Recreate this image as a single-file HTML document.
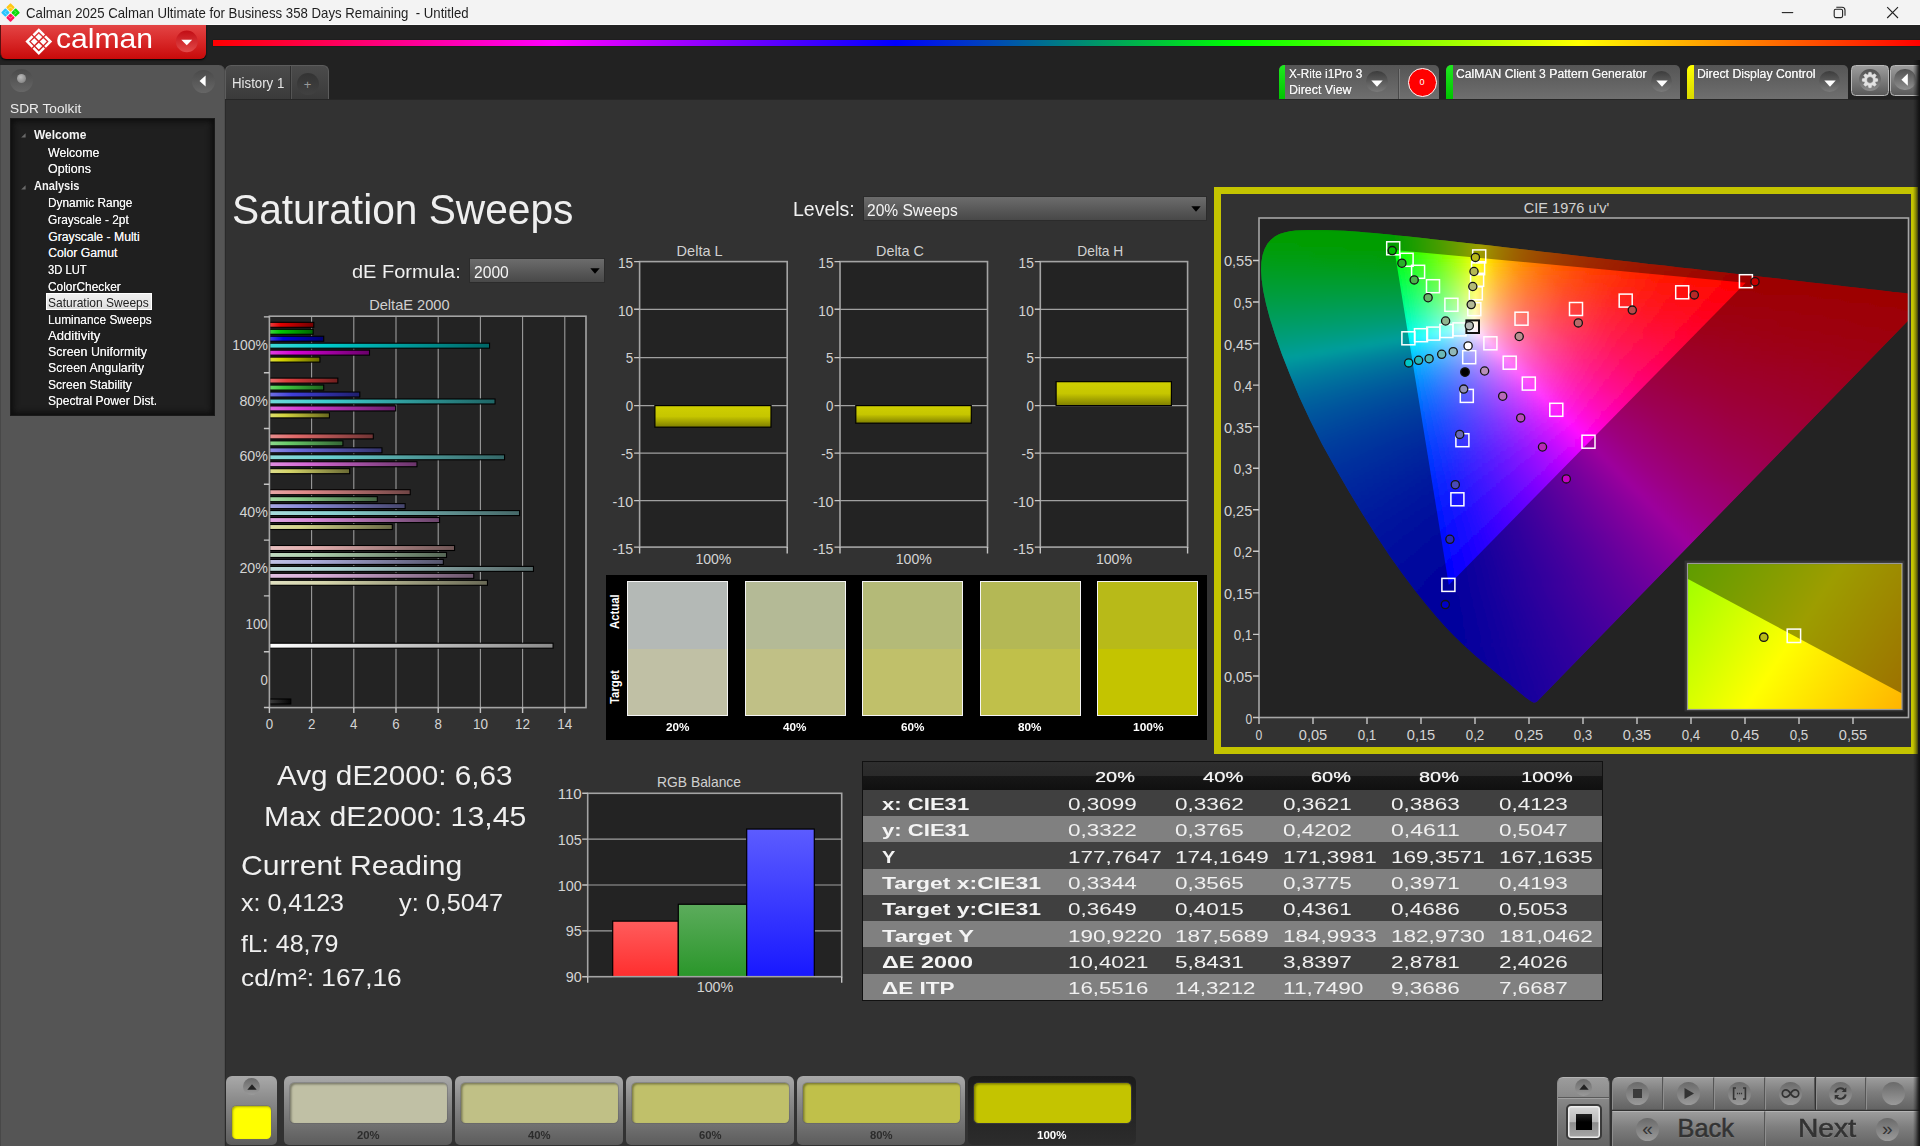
<!DOCTYPE html>
<html lang="en"><head><meta charset="utf-8"><title>Calman 2025 Calman Ultimate for Business - Untitled</title>
<style>

html,body{margin:0;padding:0}
body{width:1920px;height:1146px;overflow:hidden;position:relative;background:#323232;font-family:"Liberation Sans",sans-serif;color:#eee}
div,span,svg{position:absolute;box-sizing:border-box}
.t{white-space:pre;line-height:1;transform-origin:0 0;display:block}
svg{overflow:visible}
svg text{font-family:"Liberation Sans",sans-serif}

#titlebar{left:0;top:0;width:1920px;height:25px;background:#f3f3f3;border-bottom:1px solid #fbfbfb;color:#1e1e1e}
#band{left:0;top:25px;width:1920px;height:74px;background:#222}
#logo{left:0;top:25px;width:206px;height:34px;border-radius:0 0 6px 6px;background:linear-gradient(#e34545,#d92a2a 45%,#c80a0a);border-left:1px solid #5a1010;box-shadow:0 1px 2px #000}
#rainbow{left:213px;top:39.5px;width:1707px;height:6px;background:linear-gradient(90deg,#f00,#f0f 20%,#00f 40%,#0f0 60%,#ff0 80%,#f00);box-shadow:0 0 1px rgba(0,0,0,.6)}
.rb{border-radius:50%;background:linear-gradient(#444,#707070)}
#tabs{left:225px;top:65px;width:104px;height:34px;border-radius:6px 6px 0 0;background:linear-gradient(#4b4b4b,#3a3a3a);border:1px solid #5c5c5c;border-bottom:none}
#content{left:225px;top:99px;width:1695px;height:1047px;background:#323232;border-top:1px solid #262626;border-left:1px solid #2a2a2a}
.dev{top:65px;height:34px;border-radius:5px 5px 0 0;background:linear-gradient(#555,#6f6f6f);overflow:hidden}
.dev i{position:absolute;left:0;top:0;width:6.5px;height:34px;border-radius:5px 0 0 0}
.tbtn{top:64.7px;height:31.8px;border:1.4px solid #b8b8b8;border-radius:4.5px;background:linear-gradient(#9c9c9c,#5a5a5a)}
#rstrip{z-index:50;left:1912.5px;top:60px;width:7.5px;height:1086px;background:linear-gradient(90deg,rgba(17,17,17,0),rgba(17,17,17,.35) 40%,rgba(17,17,17,.8) 75%,#111)}

#side{left:0;top:65px;width:225px;height:1081px;background:#555;border-radius:0 6px 0 0;border-left:1.5px solid #484848;border-right:1px solid #4c4c4c}
#tree{left:9.4px;top:53px;width:205px;height:298.2px;background:#1f1f1f;box-shadow:inset 0 0 6px 2px #0c0c0c;border:1px solid #1a1a1a}
.sb{width:23px;height:23px;border-radius:50%;background:linear-gradient(#4a4a4a,#666)}
#sel{left:35px;top:174.3px;width:105.4px;height:16.3px;background:linear-gradient(#f0f0f0,#dedede);border:1px solid #fff}

.dd{background:linear-gradient(#6c6c6c,#484848);border:1px solid #2b2b2b}
#swp{left:606.2px;top:574.7px;width:600.8px;height:165.3px;background:#000}
.sw{top:6.5px;width:101.3px;height:135px;border:1px solid #f4f4f4}
.sw b{position:absolute;left:0;top:66.8px;width:100%;height:66.2px}

#tbl{left:862.3px;top:760.8px;width:740.3px;height:239.8px;background:#404040;border:1.3px solid #111;overflow:hidden}
#tbl .hd{left:0;top:0;width:100%;height:28.2px;background:linear-gradient(#2e2e2e,#2a2a2a 49%,#171717 51%,#101010)}
#tbl .r{left:0;width:100%;height:26.4px}

.bb{top:1076px;height:69px;border-radius:6px 6px 5px 5px;background:linear-gradient(#a9a9a9,#8b8b8b 35%,#5c5c5c)}
.bb u{position:absolute;left:6px;top:6.6px;width:157.5px;height:40px;border-radius:4.5px;box-shadow:inset 1.5px 1.5px 2px rgba(0,0,0,.35),0 0 0 1px rgba(90,90,90,.35)}
.bsel{background:linear-gradient(#1c1c1c,#2c2c2c)}
.cb{background:linear-gradient(#9c9c9c,#7e7e7e 45%,#646464);border:1px solid #565656;border-top-color:#b4b4b4;border-left-color:#8e8e8e}
.ic{width:23px;height:23px;border-radius:50%;background:linear-gradient(#6a6a6a,#9a9a9a)}

</style></head>
<body>
<!-- chrome -->
<div id="titlebar">
<svg width="22" height="25" viewBox="0 0 22 25" style="left:0;top:0"><g transform="translate(10.5,12.6)"><rect x="-3.1" y="-3.1" width="6.2" height="6.2" rx=".9" transform="translate(0,-5.2) rotate(45)" fill="#ffc814"/><rect x="-3.1" y="-3.1" width="6.2" height="6.2" rx=".9" transform="translate(-5.1,0) rotate(45)" fill="#28c4ff"/><rect x="-3.1" y="-3.1" width="6.2" height="6.2" rx=".9" transform="translate(5.1,0) rotate(45)" fill="#0adc0a"/><rect x="-3.1" y="-3.1" width="6.2" height="6.2" rx=".9" transform="translate(0,5.1) rotate(45)" fill="#ff145a"/><path d="M-2.100-3.600L0-5.700 2.100-3.600M-3.600-2.100L-5.700 0-3.600 2.100M3.600-2.100L5.700 0 3.600 2.100M-2.100 3.600L0 5.700 2.100 3.600" fill="none" stroke="#fff" stroke-opacity=".5" stroke-width=".8"/></g></svg>
<span class="t" style="left:26.4px;top:6.26px;font-size:14.1px;transform:scaleX(0.937);">Calman 2025 Calman Ultimate for Business 358 Days Remaining  - Untitled</span>
<svg width="140" height="25" viewBox="1780 0 140 25" style="left:1780px;top:0" fill="none" stroke="#222" stroke-width="1.1"><path d="M1781.8 12.6h11.4"/><rect x="1834.2" y="9.2" width="8.4" height="8.4" rx="1.6"/><path d="M1836.3 7.2h5.7a3 3 0 0 1 3 3v5.6"/><path d="M1887.2 7.2l10.8 10.8M1898 7.2l-10.8 10.8"/></svg>
</div>
<div id="band"></div>
<div id="logo">
<svg width="206" height="34" viewBox="0 25 206 34" style="left:-1px;top:0"><g transform="translate(38.8,41.6)" fill="#fff">
<path d="M0-13.4L13.4 0 0 13.4-13.4 0ZM0-9.8L-9.8 0 0 9.8 9.8 0Z" fill-rule="evenodd"/>
<g stroke="#d82828" stroke-width="1.3"><path d="M-7.600-7.600l3.400 3.400M7.600-7.600l-3.400 3.400M-7.600 7.600l3.400-3.400M7.600 7.600l-3.400-3.400"/></g>
<rect x="-2.45" y="-2.45" width="4.9" height="4.9" transform="translate(0,-4.5) rotate(45)"/>
<rect x="-2.45" y="-2.45" width="4.9" height="4.9" transform="translate(-4.5,0) rotate(45)"/>
<rect x="-2.45" y="-2.45" width="4.9" height="4.9" transform="translate(4.5,0) rotate(45)"/>
<rect x="-2.45" y="-2.45" width="4.9" height="4.9" transform="translate(0,4.5) rotate(45)"/>
</g>
<circle cx="186.8" cy="41.4" r="10.9" fill="url(#lgd)"/><path d="M181.3 39.7h10.9l-5.450 5.600z" fill="#fff"/>
<defs><linearGradient id="lgd" x1="0" y1="0" x2="0" y2="1"><stop offset="0" stop-color="#c20d14"/><stop offset="1" stop-color="#e24a4a"/></linearGradient></defs></svg>
<span class="t" style="left:55.2px;top:0.94px;font-size:27px;transform:scaleX(1.115);color:#fff;">calman</span>
</div>
<div id="rainbow"></div>
<div id="tabs"><div style="left:63.5px;top:0;height:34px;background:#2e2e2e;border-right:1px solid #555;width:2px"></div>
<div class="rb" style="left:71.3px;top:7.3px;width:22px;height:22px;background:linear-gradient(#333,#414141)"></div>
<span class="t" style="left:77.8px;top:12px;font-size:13px;color:#999;">+</span>
<span class="t" style="left:6.2px;top:9.85px;font-size:14px;transform:scaleX(0.947);color:#e6e6e6;">History 1</span>
</div>
<div id="content"></div>
<div class="dev" style="left:1278.5px;width:160.5px"><i style="background:linear-gradient(#1fe81f,#00c400)"></i><span class="t" style="left:10.1px;top:3.19px;font-size:12.3px;transform:scaleX(0.959);color:#f2f2f2;text-shadow:0 0 .6px #fff">X-Rite i1Pro 3</span><span class="t" style="left:10.1px;top:19.49px;font-size:12.3px;transform:scaleX(1.009);color:#f2f2f2;text-shadow:0 0 .6px #fff">Direct View</span><div class="rb" style="left:87.7px;top:6.1px;width:21.4px;height:21.4px;background:linear-gradient(#3c3c3c,#7a7a7a)"></div><svg width="12" height="8" viewBox="0 0 12 8" style="left:92.4px;top:14.6px"><path d="M.3 .6h11.4L6 6.700z" fill="#fff"/></svg><div style="left:119.7px;top:4px;width:2px;height:30px;background:#4a4a4a;border-right:1px solid #7a7a7a"></div><div style="left:129px;top:2.9px;width:29px;height:29px;border-radius:50%;background:#f00;border:1.3px solid #fff"></div><span class="t" style="left:140.9px;top:12.98px;font-size:9px;color:#fff;">0</span></div>
<div class="dev" style="left:1446px;width:234px"><i style="background:linear-gradient(#1fe81f,#00c400)"></i><span class="t" style="left:10px;top:3.19px;font-size:12.3px;transform:scaleX(0.989);color:#f2f2f2;text-shadow:0 0 .6px #fff">CalMAN Client 3 Pattern Generator</span><div class="rb" style="left:204.8px;top:6.1px;width:21.4px;height:21.4px;background:linear-gradient(#3c3c3c,#7a7a7a)"></div><svg width="12" height="8" viewBox="0 0 12 8" style="left:209.5px;top:14.6px"><path d="M.3 .6h11.4L6 6.700z" fill="#fff"/></svg></div>
<div class="dev" style="left:1687px;width:161px"><i style="background:linear-gradient(#ff0,#d8d800)"></i><span class="t" style="left:9.9px;top:3.09px;font-size:12.3px;transform:scaleX(0.996);color:#f2f2f2;text-shadow:0 0 .6px #fff">Direct Display Control</span><div class="rb" style="left:132.1px;top:6.1px;width:21.4px;height:21.4px;background:linear-gradient(#3c3c3c,#7a7a7a)"></div><svg width="12" height="8" viewBox="0 0 12 8" style="left:136.8px;top:14.6px"><path d="M.3 .6h11.4L6 6.700z" fill="#fff"/></svg></div>
<div class="tbtn" style="left:1851.2px;width:37.8px"><div class="rb" style="left:6.5px;top:3.2px;width:22.600px;height:22.600px;background:linear-gradient(#505050,#8c8c8c)"></div>
<svg width="22" height="22" viewBox="-11 -11 22 22" style="left:6.8px;top:3.5px"><path d="M-1.47 -5.51L-1.15 -7.61L1.15 -7.61L1.47 -5.51L2.86 -4.93L4.57 -6.20L6.20 -4.57L4.93 -2.86L5.51 -1.47L7.61 -1.15L7.61 1.15L5.51 1.47L4.93 2.86L6.20 4.57L4.57 6.20L2.86 4.93L1.47 5.51L1.15 7.61L-1.15 7.61L-1.47 5.51L-2.86 4.93L-4.57 6.20L-6.20 4.57L-4.93 2.86L-5.51 1.47L-7.61 1.15L-7.61 -1.15L-5.51 -1.47L-4.93 -2.86L-6.20 -4.57L-4.57 -6.20L-2.86 -4.93Z M0-3.400a3.400 3.400 0 1 0 .01 0z" fill="#e2e2e2" fill-rule="evenodd" stroke="#e2e2e2" stroke-width=".7" stroke-linejoin="round"/></svg></div>
<div class="tbtn" style="left:1889.6px;width:34px"><div class="rb" style="left:3.500px;top:3.2px;width:21.600px;height:21.600px;background:linear-gradient(#505050,#909090)"></div><svg width="8" height="14" viewBox="0 0 8 14" style="left:10.7px;top:7.2px"><path d="M6.800 .6v12.2L.4 6.700z" fill="#fff"/></svg></div>
<div id="rstrip"></div>
<!-- side -->
<div id="side">
<div class="sb" style="left:9.2px;top:4.4px"><div style="left:6.5px;top:5px;width:9px;height:9px;border-radius:50%;background:radial-gradient(circle at 40% 35%,#bbb,#777)"></div></div>
<div class="sb" style="left:190.5px;top:5px"><svg width="8" height="13" viewBox="0 0 8 13" style="left:7.6px;top:4.6px"><path d="M6.600 .5v11L.5 6z" fill="#fff"/></svg></div>
<span class="t" style="left:9px;top:36.59px;font-size:13.6px;transform:scaleX(1.007);color:#ececec;">SDR Toolkit</span>
<div id="tree">
<div id="sel"></div>
<span class="t" style="left:22.5px;top:10.17px;font-size:12.2px;transform:scaleX(0.982);font-weight:700;color:#f4f4f4;">Welcome</span>
<span class="t" style="left:36.9px;top:28.27px;font-size:12.2px;transform:scaleX(1.015);color:#f4f4f4;text-shadow:0 0 .5px #eee">Welcome</span>
<span class="t" style="left:36.9px;top:44.47px;font-size:12.2px;transform:scaleX(1.023);color:#f4f4f4;text-shadow:0 0 .5px #eee">Options</span>
<span class="t" style="left:22.5px;top:61.27px;font-size:12.2px;transform:scaleX(0.907);font-weight:700;color:#f4f4f4;">Analysis</span>
<span class="t" style="left:36.9px;top:78.27px;font-size:12.2px;transform:scaleX(0.974);color:#f4f4f4;text-shadow:0 0 .5px #eee">Dynamic Range</span>
<span class="t" style="left:36.9px;top:94.87px;font-size:12.2px;transform:scaleX(0.977);color:#f4f4f4;text-shadow:0 0 .5px #eee">Grayscale - 2pt</span>
<span class="t" style="left:36.9px;top:111.57px;font-size:12.2px;color:#f4f4f4;text-shadow:0 0 .5px #eee">Grayscale - Multi</span>
<span class="t" style="left:36.9px;top:128.17px;font-size:12.2px;color:#f4f4f4;text-shadow:0 0 .5px #eee">Color Gamut</span>
<span class="t" style="left:36.9px;top:144.87px;font-size:12.2px;transform:scaleX(0.918);color:#f4f4f4;text-shadow:0 0 .5px #eee">3D LUT</span>
<span class="t" style="left:36.9px;top:161.57px;font-size:12.2px;transform:scaleX(0.977);color:#f4f4f4;text-shadow:0 0 .5px #eee">ColorChecker</span>
<span class="t" style="left:36.9px;top:178.07px;font-size:12.2px;transform:scaleX(0.985);color:#222;">Saturation Sweeps</span>
<span class="t" style="left:36.9px;top:194.67px;font-size:12.2px;transform:scaleX(0.975);color:#f4f4f4;text-shadow:0 0 .5px #eee">Luminance Sweeps</span>
<span class="t" style="left:36.9px;top:211.07px;font-size:12.2px;transform:scaleX(1.073);color:#f4f4f4;text-shadow:0 0 .5px #eee">Additivity</span>
<span class="t" style="left:36.9px;top:227.37px;font-size:12.2px;transform:scaleX(1.021);color:#f4f4f4;text-shadow:0 0 .5px #eee">Screen Uniformity</span>
<span class="t" style="left:36.9px;top:243.47px;font-size:12.2px;transform:scaleX(1.005);color:#f4f4f4;text-shadow:0 0 .5px #eee">Screen Angularity</span>
<span class="t" style="left:36.9px;top:259.87px;font-size:12.2px;transform:scaleX(0.991);color:#f4f4f4;text-shadow:0 0 .5px #eee">Screen Stability</span>
<span class="t" style="left:36.9px;top:276.17px;font-size:12.2px;transform:scaleX(0.989);color:#f4f4f4;text-shadow:0 0 .5px #eee">Spectral Power Dist.</span>
<svg width="5" height="5" viewBox="0 0 5 5" style="left:10px;top:14.4px"><path d="M4.6 .2v4.4H.2z" fill="#6a6a6a"/></svg>
<svg width="5" height="5" viewBox="0 0 5 5" style="left:10px;top:65.5px"><path d="M4.6 .2v4.4H.2z" fill="#6a6a6a"/></svg>
</div></div>
<!-- main -->
<span class="t" style="left:231.7px;top:188.3px;font-size:43px;transform:scaleX(0.946);color:#efefef;">Saturation Sweeps</span>
<span class="t" style="left:351.7px;top:261.82px;font-size:19px;transform:scaleX(1.051);color:#f0f0f0;">dE Formula:</span>
<div class="dd" style="left:468.7px;top:257.9px;width:136.5px;height:25.2px"></div>
<span class="t" style="left:474px;top:263.61px;font-size:17px;transform:scaleX(0.920);color:#f4f4f4;">2000</span>
<svg width="10" height="6" viewBox="0 0 10 6" style="left:590px;top:268px"><path d="M.3 .2h9.4L5 5.8z" fill="#000"/></svg>
<span class="t" style="left:793px;top:198.82px;font-size:20.3px;transform:scaleX(0.961);color:#f0f0f0;">Levels:</span>
<div class="dd" style="left:862.5px;top:195.7px;width:344.2px;height:25.1px"></div>
<span class="t" style="left:867px;top:201.61px;font-size:17px;transform:scaleX(0.915);color:#f4f4f4;">20% Sweeps</span>
<svg width="10" height="6" viewBox="0 0 10 6" style="left:1191.3px;top:205.8px"><path d="M.3 .2h9.4L5 5.8z" fill="#000"/></svg>
<span class="t" style="left:276.7px;top:761.64px;font-size:27.6px;transform:scaleX(1.076);color:#f0f0f0;">Avg dE2000: 6,63</span>
<span class="t" style="left:264.3px;top:803.34px;font-size:27.6px;transform:scaleX(1.096);color:#f0f0f0;">Max dE2000: 13,45</span>
<span class="t" style="left:241px;top:851.64px;font-size:27.6px;transform:scaleX(1.093);color:#f0f0f0;">Current Reading</span>
<span class="t" style="left:241px;top:891.13px;font-size:24.3px;transform:scaleX(1.030);color:#f0f0f0;">x: 0,4123</span>
<span class="t" style="left:399.3px;top:891.13px;font-size:24.3px;transform:scaleX(1.040);color:#f0f0f0;">y: 0,5047</span>
<span class="t" style="left:241px;top:931.73px;font-size:24.3px;transform:scaleX(1.029);color:#f0f0f0;">fL: 48,79</span>
<span class="t" style="left:241px;top:966.13px;font-size:24.3px;transform:scaleX(1.082);color:#f0f0f0;">cd/m²: 167,16</span>
<div id="swp">
<div class="sw" style="left:20.8px;background:#b4b9b6"><b style="background:#c0c0a5"></b></div>
<span class="t" style="left:59.65px;top:147.81px;font-size:11.8px;transform:scaleX(0.995);font-weight:700;color:#fff;">20%</span>
<div class="sw" style="left:138.35px;background:#b4ba96"><b style="background:#c0c086"></b></div>
<span class="t" style="left:177.2px;top:147.81px;font-size:11.8px;transform:scaleX(0.995);font-weight:700;color:#fff;">40%</span>
<div class="sw" style="left:255.9px;background:#b4ba78"><b style="background:#c0c06a"></b></div>
<span class="t" style="left:294.75px;top:147.81px;font-size:11.8px;transform:scaleX(0.995);font-weight:700;color:#fff;">60%</span>
<div class="sw" style="left:373.45px;background:#b4b855"><b style="background:#c0c04a"></b></div>
<span class="t" style="left:412.3px;top:147.81px;font-size:11.8px;transform:scaleX(0.995);font-weight:700;color:#fff;">80%</span>
<div class="sw" style="left:491px;background:#b8ba18"><b style="background:#c4c400"></b></div>
<span class="t" style="left:526.35px;top:147.81px;font-size:11.8px;transform:scaleX(1.011);font-weight:700;color:#fff;">100%</span>
<span class="t" style="left:3.2px;top:54.2px;font-size:12.2px;font-weight:700;color:#fff;transform:rotate(-90deg) scaleX(.93);transform-origin:0 0">Actual</span>
<span class="t" style="left:3.2px;top:129.7px;font-size:12.2px;font-weight:700;color:#fff;transform:rotate(-90deg) scaleX(.93);transform-origin:0 0">Target</span>
</div>
<svg id="charts" width="1920" height="1146" viewBox="0 0 1920 1146" style="left:0;top:0">
<defs>
<linearGradient id="b00"><stop offset="0" stop-color="#e73f3f"/><stop offset=".25" stop-color="#e00000"/><stop offset="1" stop-color="#700000"/></linearGradient>
<linearGradient id="b01"><stop offset="0" stop-color="#3fd53f"/><stop offset=".25" stop-color="#00c800"/><stop offset="1" stop-color="#006400"/></linearGradient>
<linearGradient id="b02"><stop offset="0" stop-color="#3f3fe1"/><stop offset=".25" stop-color="#0000d8"/><stop offset="1" stop-color="#00006c"/></linearGradient>
<linearGradient id="b03"><stop offset="0" stop-color="#3fd8d8"/><stop offset=".25" stop-color="#00cccc"/><stop offset="1" stop-color="#006666"/></linearGradient>
<linearGradient id="b04"><stop offset="0" stop-color="#de3fde"/><stop offset=".25" stop-color="#d400d4"/><stop offset="1" stop-color="#6a006a"/></linearGradient>
<linearGradient id="b05"><stop offset="0" stop-color="#dddd3f"/><stop offset=".25" stop-color="#d2d200"/><stop offset="1" stop-color="#696900"/></linearGradient>
<linearGradient id="b10"><stop offset="0" stop-color="#e76f6f"/><stop offset=".25" stop-color="#e03f3f"/><stop offset="1" stop-color="#701f1f"/></linearGradient>
<linearGradient id="b11"><stop offset="0" stop-color="#6fd76f"/><stop offset=".25" stop-color="#3fca3f"/><stop offset="1" stop-color="#1f651f"/></linearGradient>
<linearGradient id="b12"><stop offset="0" stop-color="#6f6fe1"/><stop offset=".25" stop-color="#3f3fd8"/><stop offset="1" stop-color="#1f1f6c"/></linearGradient>
<linearGradient id="b13"><stop offset="0" stop-color="#6fd9d9"/><stop offset=".25" stop-color="#3fcdcd"/><stop offset="1" stop-color="#1f6666"/></linearGradient>
<linearGradient id="b14"><stop offset="0" stop-color="#df6fdf"/><stop offset=".25" stop-color="#d53fd5"/><stop offset="1" stop-color="#6a1f6a"/></linearGradient>
<linearGradient id="b15"><stop offset="0" stop-color="#dede6f"/><stop offset=".25" stop-color="#d3d33f"/><stop offset="1" stop-color="#69691f"/></linearGradient>
<linearGradient id="b20"><stop offset="0" stop-color="#e78e8e"/><stop offset=".25" stop-color="#e06969"/><stop offset="1" stop-color="#703434"/></linearGradient>
<linearGradient id="b21"><stop offset="0" stop-color="#8ed88e"/><stop offset=".25" stop-color="#69cb69"/><stop offset="1" stop-color="#346534"/></linearGradient>
<linearGradient id="b22"><stop offset="0" stop-color="#8e8ee2"/><stop offset=".25" stop-color="#6969d9"/><stop offset="1" stop-color="#34346c"/></linearGradient>
<linearGradient id="b23"><stop offset="0" stop-color="#8edbdb"/><stop offset=".25" stop-color="#69cfcf"/><stop offset="1" stop-color="#346767"/></linearGradient>
<linearGradient id="b24"><stop offset="0" stop-color="#df8edf"/><stop offset=".25" stop-color="#d569d5"/><stop offset="1" stop-color="#6a346a"/></linearGradient>
<linearGradient id="b25"><stop offset="0" stop-color="#dede8e"/><stop offset=".25" stop-color="#d4d469"/><stop offset="1" stop-color="#6a6a34"/></linearGradient>
<linearGradient id="b30"><stop offset="0" stop-color="#e7a7a7"/><stop offset=".25" stop-color="#e08a8a"/><stop offset="1" stop-color="#704545"/></linearGradient>
<linearGradient id="b31"><stop offset="0" stop-color="#a7d8a7"/><stop offset=".25" stop-color="#8acc8a"/><stop offset="1" stop-color="#456645"/></linearGradient>
<linearGradient id="b32"><stop offset="0" stop-color="#a7a7e2"/><stop offset=".25" stop-color="#8a8ad9"/><stop offset="1" stop-color="#45456c"/></linearGradient>
<linearGradient id="b33"><stop offset="0" stop-color="#a7dbdb"/><stop offset=".25" stop-color="#8ad0d0"/><stop offset="1" stop-color="#456868"/></linearGradient>
<linearGradient id="b34"><stop offset="0" stop-color="#e0a7e0"/><stop offset=".25" stop-color="#d68ad6"/><stop offset="1" stop-color="#6b456b"/></linearGradient>
<linearGradient id="b35"><stop offset="0" stop-color="#dedea7"/><stop offset=".25" stop-color="#d4d48a"/><stop offset="1" stop-color="#6a6a45"/></linearGradient>
<linearGradient id="b40"><stop offset="0" stop-color="#e7c0c0"/><stop offset=".25" stop-color="#e0acac"/><stop offset="1" stop-color="#705656"/></linearGradient>
<linearGradient id="b41"><stop offset="0" stop-color="#c0dac0"/><stop offset=".25" stop-color="#acceac"/><stop offset="1" stop-color="#566756"/></linearGradient>
<linearGradient id="b42"><stop offset="0" stop-color="#c0c0e3"/><stop offset=".25" stop-color="#acacda"/><stop offset="1" stop-color="#56566d"/></linearGradient>
<linearGradient id="b43"><stop offset="0" stop-color="#c0dcdc"/><stop offset=".25" stop-color="#acd1d1"/><stop offset="1" stop-color="#566868"/></linearGradient>
<linearGradient id="b44"><stop offset="0" stop-color="#e1c0e1"/><stop offset=".25" stop-color="#d7acd7"/><stop offset="1" stop-color="#6b566b"/></linearGradient>
<linearGradient id="b45"><stop offset="0" stop-color="#dfdfc0"/><stop offset=".25" stop-color="#d5d5ac"/><stop offset="1" stop-color="#6a6a56"/></linearGradient>
<linearGradient id="bw"><stop offset="0" stop-color="#fff"/><stop offset="1" stop-color="#8a8a8a"/></linearGradient>
<linearGradient id="bk"><stop offset="0" stop-color="#3a3a3a"/><stop offset="1" stop-color="#050505"/></linearGradient>
<linearGradient id="gy" x2="0" y2="1"><stop offset="0" stop-color="#d0d000"/><stop offset=".5" stop-color="#c6c600"/><stop offset="1" stop-color="#7e7e00"/></linearGradient>
<linearGradient id="gr" x2="0" y2="1"><stop offset="0" stop-color="#ff5c5c"/><stop offset="1" stop-color="#ff2e2e"/></linearGradient>
<linearGradient id="gg" x2="0" y2="1"><stop offset="0" stop-color="#5cac5c"/><stop offset="1" stop-color="#2a962a"/></linearGradient>
<linearGradient id="gb" x2="0" y2="1"><stop offset="0" stop-color="#5c5cff"/><stop offset="1" stop-color="#1818ff"/></linearGradient>
</defs>
<rect x="269.4" y="316.2" width="316.6" height="391.4" fill="#232323"/>
<path d="M311.6 316.2V707.6M353.8 316.2V707.6M396 316.2V707.6M438.2 316.2V707.6M480.4 316.2V707.6M522.6 316.2V707.6M564.8 316.2V707.6" stroke="#9c9c9c" stroke-width="1.1" fill="none"/>
<g stroke="#000" stroke-width="1.1"><rect x="269.7" y="322.3" width="44.1" height="5" fill="url(#b00)"/><rect x="269.7" y="329.26" width="43.47" height="5" fill="url(#b01)"/><rect x="269.7" y="336.22" width="54.02" height="5" fill="url(#b02)"/><rect x="269.7" y="343.18" width="219.86" height="5" fill="url(#b03)"/><rect x="269.7" y="350.14" width="99.8" height="5" fill="url(#b04)"/><rect x="269.7" y="357.1" width="50.22" height="5" fill="url(#b05)"/><rect x="269.7" y="378.1" width="68.15" height="5" fill="url(#b10)"/><rect x="269.7" y="385.06" width="54.02" height="5" fill="url(#b11)"/><rect x="269.7" y="392.02" width="90.1" height="5" fill="url(#b12)"/><rect x="269.7" y="398.98" width="225.35" height="5" fill="url(#b13)"/><rect x="269.7" y="405.94" width="125.97" height="5" fill="url(#b14)"/><rect x="269.7" y="412.9" width="59.71" height="5" fill="url(#b15)"/><rect x="269.7" y="433.9" width="103.6" height="5" fill="url(#b20)"/><rect x="269.7" y="440.86" width="73.22" height="5" fill="url(#b21)"/><rect x="269.7" y="447.82" width="112.25" height="5" fill="url(#b22)"/><rect x="269.7" y="454.78" width="234.84" height="5" fill="url(#b23)"/><rect x="269.7" y="461.74" width="147.28" height="5" fill="url(#b24)"/><rect x="269.7" y="468.7" width="79.97" height="5" fill="url(#b25)"/><rect x="269.7" y="489.7" width="140.53" height="5" fill="url(#b30)"/><rect x="269.7" y="496.66" width="107.61" height="5" fill="url(#b31)"/><rect x="269.7" y="503.62" width="135.46" height="5" fill="url(#b32)"/><rect x="269.7" y="510.58" width="249.82" height="5" fill="url(#b33)"/><rect x="269.7" y="517.54" width="169.86" height="5" fill="url(#b34)"/><rect x="269.7" y="524.5" width="122.59" height="5" fill="url(#b35)"/><rect x="269.7" y="545.5" width="184.84" height="5" fill="url(#b40)"/><rect x="269.7" y="552.46" width="176.82" height="5" fill="url(#b41)"/><rect x="269.7" y="559.42" width="173.65" height="5" fill="url(#b42)"/><rect x="269.7" y="566.38" width="263.75" height="5" fill="url(#b43)"/><rect x="269.7" y="573.34" width="204.04" height="5" fill="url(#b44)"/><rect x="269.7" y="580.3" width="217.75" height="5" fill="url(#b45)"/>
<rect x="269.7" y="643.2" width="283.37" height="5" fill="url(#bw)"/>
<rect x="269.7" y="699" width="21.1" height="5" fill="url(#bk)"/></g>
<rect x="269.4" y="316.2" width="316.6" height="391.4" fill="none" stroke="#a4a4a4" stroke-width="1.6"/>
<path d="M263.9 316.9h5.5M263.9 372.7h5.5M263.9 428.5h5.5M263.9 484.3h5.5M263.9 540.1h5.5M263.9 595.9h5.5M263.9 651.7h5.5M263.9 707.5h5.5M269.4 707.6v5.5M311.6 707.6v5.5M353.8 707.6v5.5M396 707.6v5.5M438.2 707.6v5.5M480.4 707.6v5.5M522.6 707.6v5.5M564.8 707.6v5.5" stroke="#c4c4c4" stroke-width="1.4" fill="none"/>
<g id="delabels"><text x="267.8" y="349.7" font-size="14.2" fill="#d4d4d4" text-anchor="end" textLength="35.5" lengthAdjust="spacingAndGlyphs">100%</text><text x="267.8" y="405.5" font-size="14.2" fill="#d4d4d4" text-anchor="end">80%</text><text x="267.8" y="461.3" font-size="14.2" fill="#d4d4d4" text-anchor="end">60%</text><text x="267.8" y="517.1" font-size="14.2" fill="#d4d4d4" text-anchor="end">40%</text><text x="267.8" y="572.9" font-size="14.2" fill="#d4d4d4" text-anchor="end">20%</text><text x="267.8" y="628.7" font-size="14.2" fill="#d4d4d4" text-anchor="end" textLength="22.3" lengthAdjust="spacingAndGlyphs">100</text><text x="267.8" y="684.5" font-size="14.2" fill="#d4d4d4" text-anchor="end" textLength="7.3" lengthAdjust="spacingAndGlyphs">0</text><text x="269.4" y="729.3" font-size="14.2" fill="#d4d4d4" text-anchor="middle" textLength="7.4" lengthAdjust="spacingAndGlyphs">0</text><text x="311.6" y="729.3" font-size="14.2" fill="#d4d4d4" text-anchor="middle" textLength="7.4" lengthAdjust="spacingAndGlyphs">2</text><text x="353.8" y="729.3" font-size="14.2" fill="#d4d4d4" text-anchor="middle" textLength="7.4" lengthAdjust="spacingAndGlyphs">4</text><text x="396" y="729.3" font-size="14.2" fill="#d4d4d4" text-anchor="middle" textLength="7.4" lengthAdjust="spacingAndGlyphs">6</text><text x="438.2" y="729.3" font-size="14.2" fill="#d4d4d4" text-anchor="middle" textLength="7.4" lengthAdjust="spacingAndGlyphs">8</text><text x="480.4" y="729.3" font-size="14.2" fill="#d4d4d4" text-anchor="middle" textLength="15" lengthAdjust="spacingAndGlyphs">10</text><text x="522.6" y="729.3" font-size="14.2" fill="#d4d4d4" text-anchor="middle" textLength="15" lengthAdjust="spacingAndGlyphs">12</text><text x="564.8" y="729.3" font-size="14.2" fill="#d4d4d4" text-anchor="middle" textLength="15" lengthAdjust="spacingAndGlyphs">14</text><text x="409.4" y="310.2" font-size="14.5" fill="#d0d0d0" text-anchor="middle" textLength="80.4" lengthAdjust="spacingAndGlyphs">DeltaE 2000</text></g>
<g id="dl"><rect x="639.6" y="261.6" width="147.6" height="285.5" fill="#232323"/><path d="M639.6 309.3H787.2M639.6 357.6H787.2M639.6 405.6H787.2M639.6 453.1H787.2M639.6 500.6H787.2" stroke="#a0a0a0" stroke-width="1.2" fill="none"/><rect x="654.9" y="405.6" width="116.1" height="21.57" fill="url(#gy)" stroke="#000" stroke-width="1.2"/><rect x="639.6" y="261.6" width="147.6" height="285.5" fill="none" stroke="#a4a4a4" stroke-width="1.6"/><path d="M634.1 261.6h5.5M634.1 309.3h5.5M634.1 357.6h5.5M634.1 405.6h5.5M634.1 453.1h5.5M634.1 500.6h5.5M634.1 547.1h5.5M639.6 547.1v6.5M787.2 547.1v6.5" stroke="#c4c4c4" stroke-width="1.4" fill="none"/><text x="633.1" y="267.75" font-size="14.2" fill="#d4d4d4" text-anchor="end" textLength="15.2" lengthAdjust="spacingAndGlyphs">15</text><text x="633.1" y="315.5" font-size="14.2" fill="#d4d4d4" text-anchor="end" textLength="15.2" lengthAdjust="spacingAndGlyphs">10</text><text x="633.1" y="363.25" font-size="14.2" fill="#d4d4d4" text-anchor="end" textLength="7.4" lengthAdjust="spacingAndGlyphs">5</text><text x="633.1" y="411" font-size="14.2" fill="#d4d4d4" text-anchor="end" textLength="7.4" lengthAdjust="spacingAndGlyphs">0</text><text x="633.1" y="458.75" font-size="14.2" fill="#d4d4d4" text-anchor="end" textLength="12.2" lengthAdjust="spacingAndGlyphs">-5</text><text x="633.1" y="506.5" font-size="14.2" fill="#d4d4d4" text-anchor="end">-10</text><text x="633.1" y="554.25" font-size="14.2" fill="#d4d4d4" text-anchor="end">-15</text><text x="699.6" y="255.8" font-size="15" fill="#d0d0d0" text-anchor="middle" textLength="46" lengthAdjust="spacingAndGlyphs">Delta L</text><text x="713.4" y="563.7" font-size="14.2" fill="#d4d4d4" text-anchor="middle" textLength="36" lengthAdjust="spacingAndGlyphs">100%</text></g>
<g id="dc"><rect x="840" y="261.6" width="147.5" height="285.5" fill="#232323"/><path d="M840 309.3H987.5M840 357.6H987.5M840 405.6H987.5M840 453.1H987.5M840 500.6H987.5" stroke="#a0a0a0" stroke-width="1.2" fill="none"/><rect x="855.8" y="405.6" width="115.5" height="17.57" fill="url(#gy)" stroke="#000" stroke-width="1.2"/><rect x="840" y="261.6" width="147.5" height="285.5" fill="none" stroke="#a4a4a4" stroke-width="1.6"/><path d="M834.5 261.6h5.5M834.5 309.3h5.5M834.5 357.6h5.5M834.5 405.6h5.5M834.5 453.1h5.5M834.5 500.6h5.5M834.5 547.1h5.5M840 547.1v6.5M987.5 547.1v6.5" stroke="#c4c4c4" stroke-width="1.4" fill="none"/><text x="833.5" y="267.75" font-size="14.2" fill="#d4d4d4" text-anchor="end" textLength="15.2" lengthAdjust="spacingAndGlyphs">15</text><text x="833.5" y="315.5" font-size="14.2" fill="#d4d4d4" text-anchor="end" textLength="15.2" lengthAdjust="spacingAndGlyphs">10</text><text x="833.5" y="363.25" font-size="14.2" fill="#d4d4d4" text-anchor="end" textLength="7.4" lengthAdjust="spacingAndGlyphs">5</text><text x="833.5" y="411" font-size="14.2" fill="#d4d4d4" text-anchor="end" textLength="7.4" lengthAdjust="spacingAndGlyphs">0</text><text x="833.5" y="458.75" font-size="14.2" fill="#d4d4d4" text-anchor="end" textLength="12.2" lengthAdjust="spacingAndGlyphs">-5</text><text x="833.5" y="506.5" font-size="14.2" fill="#d4d4d4" text-anchor="end">-10</text><text x="833.5" y="554.25" font-size="14.2" fill="#d4d4d4" text-anchor="end">-15</text><text x="900" y="255.8" font-size="15" fill="#d0d0d0" text-anchor="middle" textLength="48" lengthAdjust="spacingAndGlyphs">Delta C</text><text x="913.75" y="563.7" font-size="14.2" fill="#d4d4d4" text-anchor="middle" textLength="36" lengthAdjust="spacingAndGlyphs">100%</text></g>
<g id="dh"><rect x="1040.3" y="261.6" width="147.3" height="285.5" fill="#232323"/><path d="M1040.3 309.3H1187.6M1040.3 357.6H1187.6M1040.3 405.6H1187.6M1040.3 453.1H1187.6M1040.3 500.6H1187.6" stroke="#a0a0a0" stroke-width="1.2" fill="none"/><rect x="1056.1" y="381.66" width="115.3" height="23.94" fill="url(#gy)" stroke="#000" stroke-width="1.2"/><rect x="1040.3" y="261.6" width="147.3" height="285.5" fill="none" stroke="#a4a4a4" stroke-width="1.6"/><path d="M1034.8 261.6h5.5M1034.8 309.3h5.5M1034.8 357.6h5.5M1034.8 405.6h5.5M1034.8 453.1h5.5M1034.8 500.6h5.5M1034.8 547.1h5.5M1040.3 547.1v6.5M1187.6 547.1v6.5" stroke="#c4c4c4" stroke-width="1.4" fill="none"/><text x="1033.8" y="267.75" font-size="14.2" fill="#d4d4d4" text-anchor="end" textLength="15.2" lengthAdjust="spacingAndGlyphs">15</text><text x="1033.8" y="315.5" font-size="14.2" fill="#d4d4d4" text-anchor="end" textLength="15.2" lengthAdjust="spacingAndGlyphs">10</text><text x="1033.8" y="363.25" font-size="14.2" fill="#d4d4d4" text-anchor="end" textLength="7.4" lengthAdjust="spacingAndGlyphs">5</text><text x="1033.8" y="411" font-size="14.2" fill="#d4d4d4" text-anchor="end" textLength="7.4" lengthAdjust="spacingAndGlyphs">0</text><text x="1033.8" y="458.75" font-size="14.2" fill="#d4d4d4" text-anchor="end" textLength="12.2" lengthAdjust="spacingAndGlyphs">-5</text><text x="1033.8" y="506.5" font-size="14.2" fill="#d4d4d4" text-anchor="end">-10</text><text x="1033.8" y="554.25" font-size="14.2" fill="#d4d4d4" text-anchor="end">-15</text><text x="1100.3" y="255.8" font-size="15" fill="#d0d0d0" text-anchor="middle" textLength="46" lengthAdjust="spacingAndGlyphs">Delta H</text><text x="1113.95" y="563.7" font-size="14.2" fill="#d4d4d4" text-anchor="middle" textLength="36" lengthAdjust="spacingAndGlyphs">100%</text></g>
<g id="rgbb"><rect x="587.7" y="793.3" width="254" height="183.4" fill="#232323"/>
<path d="M587.7 839.15H841.7M587.7 885H841.7M587.7 930.85H841.7" stroke="#a0a0a0" stroke-width="1.2" fill="none"/>
<rect x="612.7" y="921.13" width="65.6" height="55.57" fill="url(#gr)" stroke="#000" stroke-width="1.2"/>
<rect x="678.3" y="904.26" width="68.4" height="72.44" fill="url(#gg)" stroke="#000" stroke-width="1.2"/>
<rect x="746.7" y="829.06" width="67.6" height="147.64" fill="url(#gb)" stroke="#000" stroke-width="1.2"/>
<rect x="587.7" y="793.3" width="254" height="183.4" fill="none" stroke="#a4a4a4" stroke-width="1.6"/>
<path d="M582.2 793.3h5.5M582.2 839.15h5.5M582.2 885h5.5M582.2 930.85h5.5M582.2 976.7h5.5M587.7 976.7v6M841.7 976.7v6" stroke="#c4c4c4" stroke-width="1.4" fill="none"/>
<text x="581.7" y="798.9" font-size="14" fill="#d4d4d4" text-anchor="end" textLength="24" lengthAdjust="spacingAndGlyphs">110</text>
<text x="581.7" y="844.75" font-size="14" fill="#d4d4d4" text-anchor="end" textLength="24" lengthAdjust="spacingAndGlyphs">105</text>
<text x="581.7" y="890.6" font-size="14" fill="#d4d4d4" text-anchor="end" textLength="24" lengthAdjust="spacingAndGlyphs">100</text>
<text x="581.7" y="936.45" font-size="14" fill="#d4d4d4" text-anchor="end" textLength="16" lengthAdjust="spacingAndGlyphs">95</text>
<text x="581.7" y="982.3" font-size="14" fill="#d4d4d4" text-anchor="end" textLength="16" lengthAdjust="spacingAndGlyphs">90</text>
<text x="699" y="787.3" font-size="14.2" fill="#d0d0d0" text-anchor="middle" textLength="84" lengthAdjust="spacingAndGlyphs">RGB Balance</text>
<text x="715" y="991.7" font-size="14.2" fill="#d4d4d4" text-anchor="middle" textLength="36.6" lengthAdjust="spacingAndGlyphs">100%</text>
</g></svg>
<!-- cie -->
<div id="ciebox" style="left:1214px;top:187px;width:704.4px;height:567px;border:7px solid #c4c400;background:#323232"></div>
<svg id="ciesvg" width="1920" height="1146" viewBox="0 0 1920 1146" style="left:0;top:0">
<defs>
<clipPath id="plotc"><rect x="1259.0" y="218.0" width="649.5" height="499.5"/></clipPath>
<clipPath id="loc" clip-path="url(#plotc)"><path d="M1536.6,702.0 1536.5,701.9 1536.5,701.9 1536.4,702.0 1536.3,702.1 1536.1,702.1 1535.9,702.0 1535.7,702.0 1535.6,702.2 1535.5,702.3 1535.4,702.4 1535.3,702.5 1535.0,702.5 1534.7,702.5 1534.4,702.4 1534.1,702.4 1533.8,702.4 1533.4,702.4 1532.9,702.3 1532.4,702.0 1531.6,701.6 1530.6,701.0 1529.5,700.2 1528.2,699.3 1526.7,698.2 1525.0,696.9 1523.0,695.3 1520.8,693.6 1518.4,691.5 1515.7,689.2 1512.8,686.7 1509.6,684.0 1506.0,681.1 1502.0,677.8 1497.5,674.1 1492.7,670.1 1487.5,665.8 1481.8,661.1 1475.7,655.9 1469.1,650.0 1462.0,643.5 1454.5,636.2 1446.3,627.8 1437.1,617.6 1426.6,605.1 1415.0,590.6 1402.8,574.3 1389.9,556.2 1376.5,536.1 1362.7,514.3 1348.9,491.4 1335.2,467.8 1322.0,443.9 1310.0,420.0 1299.3,396.9 1290.0,374.8 1281.9,354.2 1275.2,335.3 1269.9,318.5 1266.0,303.8 1263.3,290.9 1261.7,279.7 1261.1,270.2 1261.4,262.0 1262.6,254.9 1264.6,248.9 1267.4,243.8 1270.9,239.7 1274.9,236.5 1279.5,234.1 1284.5,232.4 1289.9,231.3 1295.5,230.6 1301.4,230.2 1307.5,230.0 1313.6,229.9 1319.7,229.9 1325.9,230.0 1332.1,230.2 1338.5,230.5 1345.0,230.8 1351.8,231.3 1358.8,231.8 1366.0,232.4 1373.4,233.0 1381.1,233.8 1389.2,234.6 1397.5,235.4 1406.2,236.3 1415.3,237.3 1424.7,238.3 1434.6,239.4 1444.8,240.5 1455.4,241.7 1466.5,243.0 1478.1,244.3 1490.1,245.6 1502.5,247.1 1515.4,248.6 1528.8,250.1 1542.5,251.7 1556.7,253.3 1571.3,255.0 1586.3,256.7 1601.5,258.4 1617.1,260.2 1632.9,262.0 1648.7,263.9 1664.3,265.6 1679.6,267.4 1694.8,269.1 1709.9,270.9 1724.7,272.6 1739.0,274.2 1752.6,275.7 1765.6,277.2 1777.9,278.6 1789.7,280.0 1800.7,281.3 1811.0,282.5 1820.6,283.6 1829.6,284.6 1838.0,285.5 1845.7,286.4 1853.0,287.3 1859.8,288.0 1866.3,288.8 1872.4,289.5 1878.1,290.1 1883.4,290.8 1888.4,291.3 1893.0,291.9 1897.2,292.3 1900.9,292.8 1904.3,293.1 1907.2,293.5 1909.9,293.8 1912.4,294.1 1914.6,294.3 1916.6,294.6 1918.3,294.8 1919.8,294.9 1921.0,295.1 1922.1,295.2 1923.1,295.3 1924.1,295.4 1925.0,295.5 1925.8,295.6 1926.6,295.7 1927.4,295.8 1928.2,295.9 1929.0,296.0 1929.7,296.1 1930.3,296.1 1930.7,296.2 1931.0,296.2 1931.3,296.3 1931.5,296.3 1931.7,296.3 1931.9,296.3 1931.9,296.3Z"/></clipPath>
<clipPath id="tric"><polygon points="1745.7,282.7 1394.4,250.0 1448.8,584.9"/></clipPath>
<filter id="vb" x="0" y="0" width="1920" height="1146" filterUnits="userSpaceOnUse"><feGaussianBlur stdDeviation="0 2.2"/></filter>
<linearGradient id="c0" gradientUnits="userSpaceOnUse" x1="1275" x2="1396"><stop offset="0" stop-color="#0f0"/><stop offset="0.959" stop-color="#0f0"/><stop offset="1" stop-color="#0bff00"/></linearGradient><linearGradient id="c1" gradientUnits="userSpaceOnUse" x1="1269" x2="1434"><stop offset="0" stop-color="#0f0"/><stop offset="0.739" stop-color="#0f0"/><stop offset="0.855" stop-color="#2aff00"/><stop offset="1" stop-color="#68ff00"/></linearGradient><linearGradient id="c2" gradientUnits="userSpaceOnUse" x1="1266" x2="1469"><stop offset="0" stop-color="#0f0"/><stop offset="0.621" stop-color="#0f0"/><stop offset="0.818" stop-color="#62ff00"/><stop offset="0.911" stop-color="#9f0"/><stop offset="1" stop-color="#d3ff00"/></linearGradient><linearGradient id="c3" gradientUnits="userSpaceOnUse" x1="1263" x2="1504"><stop offset="0" stop-color="#00ff05"/><stop offset="0.149" stop-color="#0f0"/><stop offset="0.539" stop-color="#0f0"/><stop offset="0.639" stop-color="#39ff00"/><stop offset="0.734" stop-color="#78ff00"/><stop offset="0.822" stop-color="#b9ff00"/><stop offset="0.905" stop-color="#feff00"/><stop offset="0.95" stop-color="#ffdb00"/><stop offset="1" stop-color="#fb0"/></linearGradient><linearGradient id="c4" gradientUnits="userSpaceOnUse" x1="1261" x2="1539"><stop offset="0" stop-color="#00ff0c"/><stop offset="0.288" stop-color="#0f0"/><stop offset="0.478" stop-color="#01ff00"/><stop offset="0.565" stop-color="#3bff00"/><stop offset="0.644" stop-color="#78ff00"/><stop offset="0.716" stop-color="#b6ff00"/><stop offset="0.791" stop-color="#fffe00"/><stop offset="0.835" stop-color="#ffd700"/><stop offset="0.881" stop-color="#ffb500"/><stop offset="0.935" stop-color="#ff9700"/><stop offset="1" stop-color="#ff7b00"/></linearGradient><linearGradient id="c5" gradientUnits="userSpaceOnUse" x1="1260" x2="1574"><stop offset="0" stop-color="#00ff12"/><stop offset="0.427" stop-color="#0f0"/><stop offset="0.497" stop-color="#35ff00"/><stop offset="0.57" stop-color="#74ff00"/><stop offset="0.637" stop-color="#b6ff00"/><stop offset="0.701" stop-color="#feff00"/><stop offset="0.758" stop-color="#ffc700"/><stop offset="0.825" stop-color="#f90"/><stop offset="0.904" stop-color="#ff7300"/><stop offset="1" stop-color="#ff5400"/></linearGradient><linearGradient id="c6" gradientUnits="userSpaceOnUse" x1="1259" x2="1609"><stop offset="0" stop-color="#00ff19"/><stop offset="0.389" stop-color="#00ff06"/><stop offset="0.454" stop-color="#39ff02"/><stop offset="0.517" stop-color="#7f0"/><stop offset="0.577" stop-color="#baff00"/><stop offset="0.631" stop-color="#ff0"/><stop offset="0.66" stop-color="#ffdc00"/><stop offset="0.694" stop-color="#ffbc00"/><stop offset="0.731" stop-color="#ff9f00"/><stop offset="0.774" stop-color="#ff8500"/><stop offset="0.874" stop-color="#ff5b00"/><stop offset="1" stop-color="#ff3900"/></linearGradient><linearGradient id="c7" gradientUnits="userSpaceOnUse" x1="1259" x2="1644"><stop offset="0" stop-color="#00ff20"/><stop offset="0.356" stop-color="#01ff0f"/><stop offset="0.416" stop-color="#3bff0b"/><stop offset="0.47" stop-color="#77ff07"/><stop offset="0.522" stop-color="#b7ff02"/><stop offset="0.571" stop-color="#fdff00"/><stop offset="0.608" stop-color="#ffd200"/><stop offset="0.642" stop-color="#ffb100"/><stop offset="0.683" stop-color="#ff9100"/><stop offset="0.73" stop-color="#ff7600"/><stop offset="0.784" stop-color="#ff5d00"/><stop offset="0.847" stop-color="#ff4800"/><stop offset="1" stop-color="#ff2600"/></linearGradient><linearGradient id="c8" gradientUnits="userSpaceOnUse" x1="1259" x2="1679"><stop offset="0" stop-color="#00ff26"/><stop offset="0.326" stop-color="#00ff18"/><stop offset="0.379" stop-color="#37ff15"/><stop offset="0.431" stop-color="#76ff11"/><stop offset="0.479" stop-color="#b8ff0d"/><stop offset="0.524" stop-color="#feff09"/><stop offset="0.557" stop-color="#ffd005"/><stop offset="0.595" stop-color="#ffa801"/><stop offset="0.64" stop-color="#ff8500"/><stop offset="0.693" stop-color="#ff6800"/><stop offset="0.752" stop-color="#ff4f00"/><stop offset="0.824" stop-color="#ff3900"/><stop offset="1" stop-color="#ff1700"/></linearGradient><linearGradient id="c9" gradientUnits="userSpaceOnUse" x1="1259" x2="1714"><stop offset="0" stop-color="#00ff2d"/><stop offset="0.303" stop-color="#00ff21"/><stop offset="0.352" stop-color="#39ff1f"/><stop offset="0.398" stop-color="#76ff1c"/><stop offset="0.442" stop-color="#b8ff18"/><stop offset="0.484" stop-color="#ffff15"/><stop offset="0.516" stop-color="#ffcc0e"/><stop offset="0.556" stop-color="#ffa008"/><stop offset="0.602" stop-color="#ff7c04"/><stop offset="0.657" stop-color="#ff5e00"/><stop offset="0.723" stop-color="#ff4300"/><stop offset="0.8" stop-color="#ff2e00"/><stop offset="1" stop-color="#ff0b00"/></linearGradient><linearGradient id="c10" gradientUnits="userSpaceOnUse" x1="1259" x2="1749"><stop offset="0" stop-color="#00ff34"/><stop offset="0.282" stop-color="#00ff2b"/><stop offset="0.322" stop-color="#32ff29"/><stop offset="0.367" stop-color="#73ff26"/><stop offset="0.406" stop-color="#b1ff24"/><stop offset="0.449" stop-color="#fffd21"/><stop offset="0.482" stop-color="#ffc718"/><stop offset="0.522" stop-color="#ff9910"/><stop offset="0.571" stop-color="#ff7309"/><stop offset="0.629" stop-color="#ff5304"/><stop offset="0.698" stop-color="#ff3900"/><stop offset="0.782" stop-color="#ff2300"/><stop offset="1" stop-color="#ff0200"/></linearGradient><linearGradient id="c11" gradientUnits="userSpaceOnUse" x1="1259" x2="1783"><stop offset="0" stop-color="#00ff3b"/><stop offset="0.265" stop-color="#00ff34"/><stop offset="0.305" stop-color="#37ff33"/><stop offset="0.344" stop-color="#72ff31"/><stop offset="0.382" stop-color="#b5ff2f"/><stop offset="0.418" stop-color="#feff2d"/><stop offset="0.42" stop-color="#fffb2d"/><stop offset="0.454" stop-color="#ffc020"/><stop offset="0.494" stop-color="#ff9217"/><stop offset="0.544" stop-color="#ff6b0f"/><stop offset="0.605" stop-color="#ff4a08"/><stop offset="0.685" stop-color="#ff2e02"/><stop offset="0.782" stop-color="#ff1700"/><stop offset="0.947" stop-color="#f00"/><stop offset="1" stop-color="#f00"/></linearGradient><linearGradient id="c12" gradientUnits="userSpaceOnUse" x1="1259" x2="1818"><stop offset="0" stop-color="#00ff42"/><stop offset="0.25" stop-color="#00ff3e"/><stop offset="0.288" stop-color="#39ff3d"/><stop offset="0.324" stop-color="#75ff3c"/><stop offset="0.358" stop-color="#b6ff3b"/><stop offset="0.392" stop-color="#fffe3a"/><stop offset="0.408" stop-color="#ffdd32"/><stop offset="0.426" stop-color="#ffbf2a"/><stop offset="0.467" stop-color="#ff8c1e"/><stop offset="0.519" stop-color="#ff6314"/><stop offset="0.583" stop-color="#ff420c"/><stop offset="0.674" stop-color="#ff2404"/><stop offset="0.792" stop-color="#ff0c00"/><stop offset="0.88" stop-color="#f00"/><stop offset="1" stop-color="#f00"/></linearGradient><linearGradient id="c13" gradientUnits="userSpaceOnUse" x1="1259" x2="1853"><stop offset="0" stop-color="#00ff4a"/><stop offset="0.236" stop-color="#00ff48"/><stop offset="0.268" stop-color="#32ff48"/><stop offset="0.303" stop-color="#71ff48"/><stop offset="0.333" stop-color="#afff48"/><stop offset="0.369" stop-color="#fffc46"/><stop offset="0.384" stop-color="#ffdb3d"/><stop offset="0.402" stop-color="#ffba34"/><stop offset="0.444" stop-color="#ff8625"/><stop offset="0.497" stop-color="#ff5c19"/><stop offset="0.564" stop-color="#ff3a0f"/><stop offset="0.668" stop-color="#ff1a06"/><stop offset="0.806" stop-color="#ff0200"/><stop offset="1" stop-color="#f00"/></linearGradient><linearGradient id="c14" gradientUnits="userSpaceOnUse" x1="1259" x2="1888"><stop offset="0" stop-color="#00ff51"/><stop offset="0.224" stop-color="#00ff53"/><stop offset="0.258" stop-color="#39ff53"/><stop offset="0.289" stop-color="#77ff54"/><stop offset="0.32" stop-color="#bbff54"/><stop offset="0.347" stop-color="#ff5"/><stop offset="0.362" stop-color="#ffd948"/><stop offset="0.38" stop-color="#ffb93e"/><stop offset="0.401" stop-color="#ff9a34"/><stop offset="0.423" stop-color="#ff812c"/><stop offset="0.477" stop-color="#ff551d"/><stop offset="0.545" stop-color="#ff3412"/><stop offset="0.642" stop-color="#ff1709"/><stop offset="0.769" stop-color="#ff0002"/><stop offset="1" stop-color="#f00"/></linearGradient><linearGradient id="c15" gradientUnits="userSpaceOnUse" x1="1260" x2="1923"><stop offset="0" stop-color="#00ff59"/><stop offset="0.213" stop-color="#01ff5e"/><stop offset="0.243" stop-color="#38ff5f"/><stop offset="0.271" stop-color="#74ff60"/><stop offset="0.297" stop-color="#b0ff61"/><stop offset="0.327" stop-color="#fffd62"/><stop offset="0.342" stop-color="#ffd754"/><stop offset="0.36" stop-color="#ffb447"/><stop offset="0.38" stop-color="#ff973c"/><stop offset="0.403" stop-color="#ff7c32"/><stop offset="0.457" stop-color="#ff5022"/><stop offset="0.528" stop-color="#ff2e16"/><stop offset="0.614" stop-color="#ff140c"/><stop offset="0.722" stop-color="#ff0005"/><stop offset="1" stop-color="#f00"/></linearGradient><linearGradient id="c16" gradientUnits="userSpaceOnUse" x1="1260" x2="1934"><stop offset="0" stop-color="#00ff60"/><stop offset="0.209" stop-color="#00ff69"/><stop offset="0.236" stop-color="#31ff6a"/><stop offset="0.266" stop-color="#70ff6c"/><stop offset="0.289" stop-color="#a9ff6e"/><stop offset="0.32" stop-color="#feff71"/><stop offset="0.322" stop-color="#fffc6f"/><stop offset="0.337" stop-color="#ffd660"/><stop offset="0.355" stop-color="#ffb251"/><stop offset="0.375" stop-color="#ff9344"/><stop offset="0.398" stop-color="#ff7939"/><stop offset="0.453" stop-color="#ff4d27"/><stop offset="0.524" stop-color="#ff2b19"/><stop offset="0.605" stop-color="#ff1310"/><stop offset="0.706" stop-color="#ff0008"/><stop offset="0.883" stop-color="#f00"/><stop offset="1" stop-color="#f00"/></linearGradient><linearGradient id="c17" gradientUnits="userSpaceOnUse" x1="1261" x2="1934"><stop offset="0" stop-color="#00ff68"/><stop offset="0.21" stop-color="#00ff74"/><stop offset="0.239" stop-color="#39ff76"/><stop offset="0.267" stop-color="#76ff79"/><stop offset="0.294" stop-color="#b9ff7c"/><stop offset="0.319" stop-color="#fffe7f"/><stop offset="0.334" stop-color="#ffd76d"/><stop offset="0.352" stop-color="#ffb35d"/><stop offset="0.371" stop-color="#ff954f"/><stop offset="0.394" stop-color="#ff7a43"/><stop offset="0.449" stop-color="#ff4d2e"/><stop offset="0.52" stop-color="#ff2b1f"/><stop offset="0.6" stop-color="#ff1314"/><stop offset="0.7" stop-color="#ff000b"/><stop offset="1" stop-color="#f00"/></linearGradient><linearGradient id="c18" gradientUnits="userSpaceOnUse" x1="1262" x2="1934"><stop offset="0" stop-color="#00ff70"/><stop offset="0.21" stop-color="#01ff80"/><stop offset="0.24" stop-color="#3bff83"/><stop offset="0.266" stop-color="#76ff86"/><stop offset="0.29" stop-color="#b1ff8a"/><stop offset="0.318" stop-color="#fffd8d"/><stop offset="0.333" stop-color="#ffd679"/><stop offset="0.351" stop-color="#ffb167"/><stop offset="0.371" stop-color="#ff9358"/><stop offset="0.393" stop-color="#ff784b"/><stop offset="0.448" stop-color="#ff4c34"/><stop offset="0.519" stop-color="#ff2923"/><stop offset="0.597" stop-color="#ff1218"/><stop offset="0.693" stop-color="#ff000f"/><stop offset="1" stop-color="#f00"/></linearGradient><linearGradient id="c19" gradientUnits="userSpaceOnUse" x1="1263" x2="1932"><stop offset="0" stop-color="#00ff78"/><stop offset="0.209" stop-color="#00ff8b"/><stop offset="0.235" stop-color="#30ff8f"/><stop offset="0.263" stop-color="#6fff93"/><stop offset="0.291" stop-color="#b6ff98"/><stop offset="0.317" stop-color="#feff9d"/><stop offset="0.318" stop-color="#fffb9b"/><stop offset="0.333" stop-color="#ffd486"/><stop offset="0.351" stop-color="#ffb072"/><stop offset="0.371" stop-color="#ff9162"/><stop offset="0.393" stop-color="#ff7753"/><stop offset="0.448" stop-color="#ff4a3b"/><stop offset="0.519" stop-color="#ff2928"/><stop offset="0.595" stop-color="#ff121c"/><stop offset="0.689" stop-color="#ff0012"/><stop offset="1" stop-color="#ff0002"/></linearGradient><linearGradient id="c20" gradientUnits="userSpaceOnUse" x1="1263" x2="1928"><stop offset="0" stop-color="#00ff81"/><stop offset="0.212" stop-color="#00ff98"/><stop offset="0.241" stop-color="#39ff9d"/><stop offset="0.268" stop-color="#75ffa2"/><stop offset="0.292" stop-color="#b2ffa7"/><stop offset="0.319" stop-color="#fffead"/><stop offset="0.334" stop-color="#ffd595"/><stop offset="0.35" stop-color="#ffb380"/><stop offset="0.37" stop-color="#ff946e"/><stop offset="0.392" stop-color="#ff785d"/><stop offset="0.447" stop-color="#ff4b42"/><stop offset="0.519" stop-color="#ff282e"/><stop offset="0.594" stop-color="#ff1220"/><stop offset="0.687" stop-color="#ff0016"/><stop offset="1" stop-color="#ff0004"/></linearGradient><linearGradient id="c21" gradientUnits="userSpaceOnUse" x1="1264" x2="1924"><stop offset="0" stop-color="#00ff89"/><stop offset="0.214" stop-color="#01ffa5"/><stop offset="0.242" stop-color="#3bffaa"/><stop offset="0.268" stop-color="#75ffb0"/><stop offset="0.291" stop-color="#afffb6"/><stop offset="0.32" stop-color="#fffcbc"/><stop offset="0.335" stop-color="#ffd4a2"/><stop offset="0.352" stop-color="#ffb18c"/><stop offset="0.371" stop-color="#ff9277"/><stop offset="0.394" stop-color="#ff7666"/><stop offset="0.448" stop-color="#ff4a49"/><stop offset="0.52" stop-color="#ff2833"/><stop offset="0.594" stop-color="#ff1225"/><stop offset="0.685" stop-color="#ff0019"/><stop offset="1" stop-color="#ff0006"/></linearGradient><linearGradient id="c22" gradientUnits="userSpaceOnUse" x1="1265" x2="1920"><stop offset="0" stop-color="#00ff92"/><stop offset="0.214" stop-color="#00ffb1"/><stop offset="0.24" stop-color="#33ffb7"/><stop offset="0.269" stop-color="#74ffbf"/><stop offset="0.295" stop-color="#b7ffc6"/><stop offset="0.319" stop-color="#ffffce"/><stop offset="0.334" stop-color="#ffd5b1"/><stop offset="0.351" stop-color="#ffb299"/><stop offset="0.371" stop-color="#ff9283"/><stop offset="0.392" stop-color="#ff7870"/><stop offset="0.418" stop-color="#ff5f5f"/><stop offset="0.447" stop-color="#ff4a51"/><stop offset="0.518" stop-color="#ff2839"/><stop offset="0.591" stop-color="#ff1229"/><stop offset="0.682" stop-color="#ff001d"/><stop offset="1" stop-color="#ff0008"/></linearGradient><linearGradient id="c23" gradientUnits="userSpaceOnUse" x1="1267" x2="1916"><stop offset="0" stop-color="#00ff9b"/><stop offset="0.117" stop-color="#00ffab"/><stop offset="0.214" stop-color="#00ffbf"/><stop offset="0.242" stop-color="#38ffc6"/><stop offset="0.268" stop-color="#74ffce"/><stop offset="0.291" stop-color="#afffd6"/><stop offset="0.319" stop-color="#fffdde"/><stop offset="0.334" stop-color="#ffd3bf"/><stop offset="0.351" stop-color="#ffb0a5"/><stop offset="0.371" stop-color="#ff908d"/><stop offset="0.393" stop-color="#ff7679"/><stop offset="0.447" stop-color="#ff4a58"/><stop offset="0.518" stop-color="#ff273e"/><stop offset="0.59" stop-color="#ff122e"/><stop offset="0.68" stop-color="#ff0021"/><stop offset="1" stop-color="#ff000a"/></linearGradient><linearGradient id="c24" gradientUnits="userSpaceOnUse" x1="1268" x2="1912"><stop offset="0" stop-color="#00ffa4"/><stop offset="0.118" stop-color="#00ffb7"/><stop offset="0.216" stop-color="#01ffcd"/><stop offset="0.244" stop-color="#3affd5"/><stop offset="0.269" stop-color="#73ffdd"/><stop offset="0.295" stop-color="#b8ffe7"/><stop offset="0.318" stop-color="#fefff1"/><stop offset="0.32" stop-color="#fffbef"/><stop offset="0.334" stop-color="#ffd5d0"/><stop offset="0.351" stop-color="#ffb1b3"/><stop offset="0.371" stop-color="#ff9199"/><stop offset="0.393" stop-color="#ff7684"/><stop offset="0.447" stop-color="#ff495f"/><stop offset="0.519" stop-color="#ff2644"/><stop offset="0.59" stop-color="#f13"/><stop offset="0.677" stop-color="#ff0025"/><stop offset="0.817" stop-color="#ff0017"/><stop offset="1" stop-color="#ff000d"/></linearGradient><linearGradient id="c25" gradientUnits="userSpaceOnUse" x1="1269" x2="1908"><stop offset="0" stop-color="#00ffae"/><stop offset="0.119" stop-color="#00ffc2"/><stop offset="0.216" stop-color="#00ffdb"/><stop offset="0.239" stop-color="#2fffe3"/><stop offset="0.266" stop-color="#6bffec"/><stop offset="0.288" stop-color="#a4fff5"/><stop offset="0.308" stop-color="#deffff"/><stop offset="0.321" stop-color="#fff9ff"/><stop offset="0.335" stop-color="#ffd3de"/><stop offset="0.352" stop-color="#ffafbf"/><stop offset="0.372" stop-color="#ff8fa3"/><stop offset="0.394" stop-color="#ff748d"/><stop offset="0.449" stop-color="#ff4766"/><stop offset="0.52" stop-color="#ff2649"/><stop offset="0.588" stop-color="#ff1138"/><stop offset="0.674" stop-color="#ff0029"/><stop offset="0.815" stop-color="#ff001a"/><stop offset="1" stop-color="#ff000f"/></linearGradient><linearGradient id="c26" gradientUnits="userSpaceOnUse" x1="1270" x2="1905"><stop offset="0" stop-color="#00ffb7"/><stop offset="0.12" stop-color="#00ffce"/><stop offset="0.217" stop-color="#00ffea"/><stop offset="0.246" stop-color="#3bfff4"/><stop offset="0.271" stop-color="#76ffff"/><stop offset="0.328" stop-color="#ffe5ff"/><stop offset="0.343" stop-color="#ffbfdd"/><stop offset="0.361" stop-color="#ff9fbf"/><stop offset="0.381" stop-color="#ff82a5"/><stop offset="0.403" stop-color="#ff6a8f"/><stop offset="0.458" stop-color="#ff4169"/><stop offset="0.531" stop-color="#ff214c"/><stop offset="0.594" stop-color="#ff0f3b"/><stop offset="0.671" stop-color="#ff002d"/><stop offset="0.813" stop-color="#ff001d"/><stop offset="1" stop-color="#f01"/></linearGradient><linearGradient id="c27" gradientUnits="userSpaceOnUse" x1="1271" x2="1901"><stop offset="0" stop-color="#00ffc1"/><stop offset="0.119" stop-color="#00ffda"/><stop offset="0.217" stop-color="#00fff9"/><stop offset="0.235" stop-color="#22feff"/><stop offset="0.286" stop-color="#8ee9ff"/><stop offset="0.335" stop-color="#ffd2ff"/><stop offset="0.337" stop-color="#ffcffc"/><stop offset="0.352" stop-color="#ffaedb"/><stop offset="0.37" stop-color="#ff91bf"/><stop offset="0.39" stop-color="#ff77a6"/><stop offset="0.414" stop-color="#ff608f"/><stop offset="0.471" stop-color="#ff396a"/><stop offset="0.544" stop-color="#ff1c4d"/><stop offset="0.67" stop-color="#ff0031"/><stop offset="0.813" stop-color="#ff0020"/><stop offset="1" stop-color="#ff0013"/></linearGradient><linearGradient id="c28" gradientUnits="userSpaceOnUse" x1="1273" x2="1897"><stop offset="0" stop-color="#00ffcb"/><stop offset="0.106" stop-color="#00ffe3"/><stop offset="0.194" stop-color="#0ff"/><stop offset="0.218" stop-color="#00f6ff"/><stop offset="0.271" stop-color="#68e0ff"/><stop offset="0.343" stop-color="#ffbffc"/><stop offset="0.359" stop-color="#ffa0dd"/><stop offset="0.378" stop-color="#ff84c0"/><stop offset="0.423" stop-color="#ff5791"/><stop offset="0.481" stop-color="#ff346c"/><stop offset="0.554" stop-color="#ff184f"/><stop offset="0.667" stop-color="#ff0036"/><stop offset="0.811" stop-color="#ff0023"/><stop offset="1" stop-color="#ff0016"/></linearGradient><linearGradient id="c29" gradientUnits="userSpaceOnUse" x1="1274" x2="1893"><stop offset="0" stop-color="#00ffd5"/><stop offset="0.155" stop-color="#0ff"/><stop offset="0.22" stop-color="#00e7ff"/><stop offset="0.278" stop-color="#6dd0ff"/><stop offset="0.351" stop-color="#ffaffc"/><stop offset="0.367" stop-color="#ff94de"/><stop offset="0.386" stop-color="#ff7ac2"/><stop offset="0.433" stop-color="#ff4f92"/><stop offset="0.491" stop-color="#ff2f6e"/><stop offset="0.567" stop-color="#ff1451"/><stop offset="0.664" stop-color="#ff003b"/><stop offset="0.808" stop-color="#ff0027"/><stop offset="1" stop-color="#ff0018"/></linearGradient><linearGradient id="c30" gradientUnits="userSpaceOnUse" x1="1275" x2="1889"><stop offset="0" stop-color="#00ffe0"/><stop offset="0.116" stop-color="#0ff"/><stop offset="0.22" stop-color="#00dbff"/><stop offset="0.279" stop-color="#67c4ff"/><stop offset="0.358" stop-color="#ffa2fc"/><stop offset="0.375" stop-color="#ff89df"/><stop offset="0.393" stop-color="#ff73c6"/><stop offset="0.433" stop-color="#ff4f9c"/><stop offset="0.485" stop-color="#ff3179"/><stop offset="0.549" stop-color="#ff195d"/><stop offset="0.661" stop-color="#ff0040"/><stop offset="0.806" stop-color="#ff002a"/><stop offset="1" stop-color="#ff001a"/></linearGradient><linearGradient id="c31" gradientUnits="userSpaceOnUse" x1="1277" x2="1885"><stop offset="0" stop-color="#00ffeb"/><stop offset="0.074" stop-color="#0ff"/><stop offset="0.22" stop-color="#00ceff"/><stop offset="0.285" stop-color="#6db7ff"/><stop offset="0.365" stop-color="#ff95fd"/><stop offset="0.4" stop-color="#ff6ac8"/><stop offset="0.441" stop-color="#ff489e"/><stop offset="0.492" stop-color="#ff2d7c"/><stop offset="0.556" stop-color="#ff1660"/><stop offset="0.658" stop-color="#ff0045"/><stop offset="0.804" stop-color="#ff002e"/><stop offset="1" stop-color="#ff001d"/></linearGradient><linearGradient id="c32" gradientUnits="userSpaceOnUse" x1="1278" x2="1881"><stop offset="0" stop-color="#00fff6"/><stop offset="0.033" stop-color="#0ff"/><stop offset="0.222" stop-color="#01c3ff"/><stop offset="0.292" stop-color="#72aaff"/><stop offset="0.373" stop-color="#ff89fd"/><stop offset="0.408" stop-color="#ff62c9"/><stop offset="0.449" stop-color="#ff42a1"/><stop offset="0.501" stop-color="#ff297f"/><stop offset="0.566" stop-color="#ff1363"/><stop offset="0.655" stop-color="#ff004a"/><stop offset="0.803" stop-color="#ff0031"/><stop offset="1" stop-color="#ff001f"/></linearGradient><linearGradient id="c33" gradientUnits="userSpaceOnUse" x1="1280" x2="1877"><stop offset="0" stop-color="#00fcff"/><stop offset="0.221" stop-color="#00b9ff"/><stop offset="0.291" stop-color="#6ca1ff"/><stop offset="0.38" stop-color="#ff7efd"/><stop offset="0.415" stop-color="#ff5acb"/><stop offset="0.457" stop-color="#ff3da3"/><stop offset="0.509" stop-color="#ff2481"/><stop offset="0.573" stop-color="#ff1066"/><stop offset="0.652" stop-color="#ff004f"/><stop offset="0.801" stop-color="#ff0035"/><stop offset="1" stop-color="#f02"/></linearGradient><linearGradient id="c34" gradientUnits="userSpaceOnUse" x1="1281" x2="1873"><stop offset="0" stop-color="#00f1ff"/><stop offset="0.223" stop-color="#00afff"/><stop offset="0.299" stop-color="#7096ff"/><stop offset="0.389" stop-color="#ff74fd"/><stop offset="0.424" stop-color="#ff52cd"/><stop offset="0.466" stop-color="#ff37a5"/><stop offset="0.519" stop-color="#ff2084"/><stop offset="0.581" stop-color="#ff0e69"/><stop offset="0.649" stop-color="#f05"/><stop offset="0.75" stop-color="#ff0040"/><stop offset="1" stop-color="#ff0024"/></linearGradient><linearGradient id="c35" gradientUnits="userSpaceOnUse" x1="1283" x2="1869"><stop offset="0" stop-color="#00e6ff"/><stop offset="0.224" stop-color="#01a6ff"/><stop offset="0.305" stop-color="#758bff"/><stop offset="0.396" stop-color="#ff6afd"/><stop offset="0.432" stop-color="#ff4bce"/><stop offset="0.474" stop-color="#ff32a7"/><stop offset="0.526" stop-color="#ff1d87"/><stop offset="0.589" stop-color="#ff0b6c"/><stop offset="0.645" stop-color="#ff005b"/><stop offset="0.756" stop-color="#ff0043"/><stop offset="1" stop-color="#ff0027"/></linearGradient><linearGradient id="c36" gradientUnits="userSpaceOnUse" x1="1284" x2="1866"><stop offset="0" stop-color="#0df"/><stop offset="0.223" stop-color="#009eff"/><stop offset="0.306" stop-color="#6f84ff"/><stop offset="0.404" stop-color="#ff61fd"/><stop offset="0.44" stop-color="#ff45cf"/><stop offset="0.483" stop-color="#ff2da9"/><stop offset="0.534" stop-color="#ff1989"/><stop offset="0.598" stop-color="#ff086e"/><stop offset="0.641" stop-color="#ff0061"/><stop offset="0.763" stop-color="#ff0046"/><stop offset="1" stop-color="#ff002a"/></linearGradient><linearGradient id="c37" gradientUnits="userSpaceOnUse" x1="1286" x2="1862"><stop offset="0" stop-color="#00d3ff"/><stop offset="0.224" stop-color="#0096ff"/><stop offset="0.312" stop-color="#747bff"/><stop offset="0.411" stop-color="#ff59fe"/><stop offset="0.448" stop-color="#ff3ed1"/><stop offset="0.491" stop-color="#ff28ab"/><stop offset="0.543" stop-color="#ff168c"/><stop offset="0.606" stop-color="#ff0671"/><stop offset="0.637" stop-color="#ff0067"/><stop offset="0.769" stop-color="#ff0049"/><stop offset="1" stop-color="#ff002c"/></linearGradient><linearGradient id="c38" gradientUnits="userSpaceOnUse" x1="1288" x2="1858"><stop offset="0" stop-color="#00caff"/><stop offset="0.225" stop-color="#018fff"/><stop offset="0.318" stop-color="#7572ff"/><stop offset="0.419" stop-color="#ff51fe"/><stop offset="0.456" stop-color="#ff38d2"/><stop offset="0.5" stop-color="#ff24ad"/><stop offset="0.553" stop-color="#ff128e"/><stop offset="0.614" stop-color="#ff0474"/><stop offset="0.688" stop-color="#ff005e"/><stop offset="0.774" stop-color="#ff004c"/><stop offset="1" stop-color="#ff002f"/></linearGradient><linearGradient id="c39" gradientUnits="userSpaceOnUse" x1="1289" x2="1854"><stop offset="0" stop-color="#00c2ff"/><stop offset="0.225" stop-color="#08f"/><stop offset="0.32" stop-color="#736cff"/><stop offset="0.428" stop-color="#ff49fe"/><stop offset="0.465" stop-color="#ff33d3"/><stop offset="0.508" stop-color="#ff20b0"/><stop offset="0.559" stop-color="#ff1092"/><stop offset="0.621" stop-color="#ff0277"/><stop offset="0.694" stop-color="#ff0061"/><stop offset="0.779" stop-color="#ff004f"/><stop offset="1" stop-color="#ff0032"/></linearGradient><linearGradient id="c40" gradientUnits="userSpaceOnUse" x1="1291" x2="1850"><stop offset="0" stop-color="#00baff"/><stop offset="0.225" stop-color="#0081ff"/><stop offset="0.327" stop-color="#7664ff"/><stop offset="0.436" stop-color="#ff42fe"/><stop offset="0.474" stop-color="#ff2dd4"/><stop offset="0.517" stop-color="#ff1cb2"/><stop offset="0.569" stop-color="#ff0c93"/><stop offset="0.63" stop-color="#ff007a"/><stop offset="0.701" stop-color="#ff0064"/><stop offset="0.785" stop-color="#ff0052"/><stop offset="1" stop-color="#ff0035"/></linearGradient><linearGradient id="c41" gradientUnits="userSpaceOnUse" x1="1293" x2="1846"><stop offset="0" stop-color="#00b2ff"/><stop offset="0.226" stop-color="#017bff"/><stop offset="0.333" stop-color="#785dff"/><stop offset="0.445" stop-color="#ff3cfe"/><stop offset="0.483" stop-color="#ff28d5"/><stop offset="0.526" stop-color="#ff18b3"/><stop offset="0.579" stop-color="#ff0995"/><stop offset="0.638" stop-color="#ff007d"/><stop offset="0.709" stop-color="#ff0067"/><stop offset="0.79" stop-color="#f05"/><stop offset="1" stop-color="#ff0038"/></linearGradient><linearGradient id="c42" gradientUnits="userSpaceOnUse" x1="1294" x2="1842"><stop offset="0" stop-color="#00abff"/><stop offset="0.226" stop-color="#0075ff"/><stop offset="0.336" stop-color="#7558ff"/><stop offset="0.454" stop-color="#ff35fe"/><stop offset="0.493" stop-color="#ff23d6"/><stop offset="0.536" stop-color="#ff14b5"/><stop offset="0.619" stop-color="#ff008a"/><stop offset="0.646" stop-color="#ff0080"/><stop offset="0.715" stop-color="#ff006b"/><stop offset="0.796" stop-color="#ff0058"/><stop offset="1" stop-color="#ff003b"/></linearGradient><linearGradient id="c43" gradientUnits="userSpaceOnUse" x1="1296" x2="1838"><stop offset="0" stop-color="#00a4ff"/><stop offset="0.227" stop-color="#0070ff"/><stop offset="0.343" stop-color="#7951ff"/><stop offset="0.463" stop-color="#ff2ffe"/><stop offset="0.5" stop-color="#ff1fd9"/><stop offset="0.544" stop-color="#ff10b8"/><stop offset="0.614" stop-color="#ff0092"/><stop offset="0.655" stop-color="#ff0082"/><stop offset="0.803" stop-color="#ff005b"/><stop offset="1" stop-color="#ff003e"/></linearGradient><linearGradient id="c44" gradientUnits="userSpaceOnUse" x1="1298" x2="1834"><stop offset="0" stop-color="#009dff"/><stop offset="0.228" stop-color="#016aff"/><stop offset="0.349" stop-color="#7a4cff"/><stop offset="0.472" stop-color="#ff2afe"/><stop offset="0.509" stop-color="#ff1bda"/><stop offset="0.554" stop-color="#ff0db9"/><stop offset="0.61" stop-color="#ff009b"/><stop offset="0.662" stop-color="#ff0085"/><stop offset="0.808" stop-color="#ff005e"/><stop offset="1" stop-color="#ff0041"/></linearGradient><linearGradient id="c45" gradientUnits="userSpaceOnUse" x1="1300" x2="1830"><stop offset="0" stop-color="#0097ff"/><stop offset="0.226" stop-color="#06f"/><stop offset="0.351" stop-color="#7747ff"/><stop offset="0.481" stop-color="#ff24fe"/><stop offset="0.519" stop-color="#ff16db"/><stop offset="0.562" stop-color="#ff0abb"/><stop offset="0.608" stop-color="#ff00a3"/><stop offset="0.67" stop-color="#ff0089"/><stop offset="0.811" stop-color="#ff0062"/><stop offset="1" stop-color="#ff0045"/></linearGradient><linearGradient id="c46" gradientUnits="userSpaceOnUse" x1="1301" x2="1827"><stop offset="0" stop-color="#0091ff"/><stop offset="0.228" stop-color="#0061ff"/><stop offset="0.359" stop-color="#7b41ff"/><stop offset="0.49" stop-color="#ff1ffe"/><stop offset="0.529" stop-color="#ff12db"/><stop offset="0.572" stop-color="#ff06bd"/><stop offset="0.603" stop-color="#ff00ac"/><stop offset="0.679" stop-color="#ff008b"/><stop offset="0.817" stop-color="#ff0065"/><stop offset="1" stop-color="#ff0048"/></linearGradient><linearGradient id="c47" gradientUnits="userSpaceOnUse" x1="1303" x2="1823"><stop offset="0" stop-color="#008cff"/><stop offset="0.229" stop-color="#015cff"/><stop offset="0.363" stop-color="#7a3dff"/><stop offset="0.5" stop-color="#ff1aff"/><stop offset="0.538" stop-color="#ff0edc"/><stop offset="0.581" stop-color="#ff04bf"/><stop offset="0.631" stop-color="#ff00a5"/><stop offset="0.687" stop-color="#ff008e"/><stop offset="0.823" stop-color="#ff0068"/><stop offset="1" stop-color="#ff004b"/></linearGradient><linearGradient id="c48" gradientUnits="userSpaceOnUse" x1="1305" x2="1819"><stop offset="0" stop-color="#0086ff"/><stop offset="0.228" stop-color="#0058ff"/><stop offset="0.368" stop-color="#7938ff"/><stop offset="0.51" stop-color="#ff16ff"/><stop offset="0.549" stop-color="#ff0add"/><stop offset="0.591" stop-color="#ff00c0"/><stop offset="0.695" stop-color="#ff0091"/><stop offset="0.829" stop-color="#ff006c"/><stop offset="1" stop-color="#ff004f"/></linearGradient><linearGradient id="c49" gradientUnits="userSpaceOnUse" x1="1307" x2="1815"><stop offset="0" stop-color="#0081ff"/><stop offset="0.228" stop-color="#0054ff"/><stop offset="0.374" stop-color="#7a34ff"/><stop offset="0.52" stop-color="#f1f"/><stop offset="0.557" stop-color="#ff07df"/><stop offset="0.6" stop-color="#ff00c3"/><stop offset="0.703" stop-color="#ff0094"/><stop offset="0.833" stop-color="#ff006f"/><stop offset="1" stop-color="#ff0052"/></linearGradient><linearGradient id="c50" gradientUnits="userSpaceOnUse" x1="1309" x2="1811"><stop offset="0" stop-color="#007cff"/><stop offset="0.229" stop-color="#0150ff"/><stop offset="0.38" stop-color="#7c30ff"/><stop offset="0.53" stop-color="#ff0dff"/><stop offset="0.584" stop-color="#ff00d5"/><stop offset="0.61" stop-color="#ff00c5"/><stop offset="0.711" stop-color="#ff0097"/><stop offset="0.839" stop-color="#ff0073"/><stop offset="1" stop-color="#ff0056"/></linearGradient><linearGradient id="c51" gradientUnits="userSpaceOnUse" x1="1311" x2="1807"><stop offset="0" stop-color="#07f"/><stop offset="0.228" stop-color="#004cff"/><stop offset="0.385" stop-color="#7b2cff"/><stop offset="0.54" stop-color="#ff09ff"/><stop offset="0.579" stop-color="#ff00e1"/><stop offset="0.619" stop-color="#ff00c7"/><stop offset="0.72" stop-color="#ff009a"/><stop offset="0.845" stop-color="#ff0076"/><stop offset="1" stop-color="#ff005a"/></linearGradient><linearGradient id="c52" gradientUnits="userSpaceOnUse" x1="1313" x2="1803"><stop offset="0" stop-color="#0072ff"/><stop offset="0.229" stop-color="#0048ff"/><stop offset="0.392" stop-color="#7c28ff"/><stop offset="0.551" stop-color="#ff05ff"/><stop offset="0.573" stop-color="#ff00ed"/><stop offset="0.629" stop-color="#ff00c9"/><stop offset="0.727" stop-color="#ff009d"/><stop offset="0.849" stop-color="#ff007a"/><stop offset="1" stop-color="#ff005e"/></linearGradient><linearGradient id="c53" gradientUnits="userSpaceOnUse" x1="1315" x2="1799"><stop offset="0" stop-color="#006dff"/><stop offset="0.229" stop-color="#0145ff"/><stop offset="0.399" stop-color="#7d24ff"/><stop offset="0.562" stop-color="#ff01ff"/><stop offset="0.64" stop-color="#ff00ca"/><stop offset="0.736" stop-color="#ff00a0"/><stop offset="0.853" stop-color="#ff007e"/><stop offset="1" stop-color="#ff0062"/></linearGradient><linearGradient id="c54" gradientUnits="userSpaceOnUse" x1="1317" x2="1795"><stop offset="0" stop-color="#0069ff"/><stop offset="0.228" stop-color="#0042ff"/><stop offset="0.404" stop-color="#7c21ff"/><stop offset="0.573" stop-color="#f0f"/><stop offset="0.651" stop-color="#f0c"/><stop offset="0.745" stop-color="#ff00a3"/><stop offset="0.86" stop-color="#ff0081"/><stop offset="1" stop-color="#f06"/></linearGradient><linearGradient id="c55" gradientUnits="userSpaceOnUse" x1="1319" x2="1791"><stop offset="0" stop-color="#0065ff"/><stop offset="0.229" stop-color="#003eff"/><stop offset="0.411" stop-color="#7d1dff"/><stop offset="0.557" stop-color="#ea00ff"/><stop offset="0.585" stop-color="#f0f"/><stop offset="0.661" stop-color="#ff00ce"/><stop offset="0.752" stop-color="#ff00a6"/><stop offset="0.864" stop-color="#ff0085"/><stop offset="1" stop-color="#ff006a"/></linearGradient><linearGradient id="c56" gradientUnits="userSpaceOnUse" x1="1321" x2="1788"><stop offset="0" stop-color="#0061ff"/><stop offset="0.229" stop-color="#013bff"/><stop offset="0.392" stop-color="#6d1eff"/><stop offset="0.55" stop-color="#d0f"/><stop offset="0.595" stop-color="#f0f"/><stop offset="0.67" stop-color="#ff00d0"/><stop offset="0.76" stop-color="#ff00a9"/><stop offset="0.869" stop-color="#ff0089"/><stop offset="1" stop-color="#ff006e"/></linearGradient><linearGradient id="c57" gradientUnits="userSpaceOnUse" x1="1323" x2="1784"><stop offset="0" stop-color="#005dff"/><stop offset="0.228" stop-color="#0039ff"/><stop offset="0.388" stop-color="#671dff"/><stop offset="0.544" stop-color="#d200ff"/><stop offset="0.607" stop-color="#f0f"/><stop offset="0.681" stop-color="#ff00d2"/><stop offset="0.77" stop-color="#ff00ac"/><stop offset="0.874" stop-color="#ff008d"/><stop offset="1" stop-color="#ff0072"/></linearGradient><linearGradient id="c58" gradientUnits="userSpaceOnUse" x1="1326" x2="1780"><stop offset="0" stop-color="#0059ff"/><stop offset="0.227" stop-color="#0036ff"/><stop offset="0.385" stop-color="#621bff"/><stop offset="0.537" stop-color="#c600ff"/><stop offset="0.619" stop-color="#f0f"/><stop offset="0.692" stop-color="#ff00d4"/><stop offset="0.778" stop-color="#ff00af"/><stop offset="0.879" stop-color="#ff0091"/><stop offset="1" stop-color="#f07"/></linearGradient><linearGradient id="c59" gradientUnits="userSpaceOnUse" x1="1328" x2="1776"><stop offset="0" stop-color="#05f"/><stop offset="0.228" stop-color="#0133ff"/><stop offset="0.531" stop-color="#bc00ff"/><stop offset="0.632" stop-color="#f0f"/><stop offset="0.703" stop-color="#ff00d6"/><stop offset="0.786" stop-color="#ff00b3"/><stop offset="0.884" stop-color="#ff0095"/><stop offset="1" stop-color="#ff007b"/></linearGradient><linearGradient id="c60" gradientUnits="userSpaceOnUse" x1="1330" x2="1772"><stop offset="0" stop-color="#0052ff"/><stop offset="0.226" stop-color="#0031ff"/><stop offset="0.527" stop-color="#b300ff"/><stop offset="0.645" stop-color="#f0f"/><stop offset="0.715" stop-color="#ff00d7"/><stop offset="0.796" stop-color="#ff00b5"/><stop offset="0.891" stop-color="#ff0098"/><stop offset="1" stop-color="#ff0080"/></linearGradient><linearGradient id="c61" gradientUnits="userSpaceOnUse" x1="1332" x2="1768"><stop offset="0" stop-color="#004eff"/><stop offset="0.227" stop-color="#002eff"/><stop offset="0.521" stop-color="#a900ff"/><stop offset="0.658" stop-color="#f0f"/><stop offset="0.727" stop-color="#ff00d9"/><stop offset="0.805" stop-color="#ff00b9"/><stop offset="0.894" stop-color="#ff009d"/><stop offset="1" stop-color="#ff0085"/></linearGradient><linearGradient id="c62" gradientUnits="userSpaceOnUse" x1="1335" x2="1764"><stop offset="0" stop-color="#004bff"/><stop offset="0.226" stop-color="#012bff"/><stop offset="0.513" stop-color="#9f00ff"/><stop offset="0.671" stop-color="#f0f"/><stop offset="0.739" stop-color="#ff00db"/><stop offset="0.814" stop-color="#ff00bc"/><stop offset="0.9" stop-color="#ff00a1"/><stop offset="1" stop-color="#ff008a"/></linearGradient><linearGradient id="c63" gradientUnits="userSpaceOnUse" x1="1337" x2="1760"><stop offset="0" stop-color="#0047ff"/><stop offset="0.225" stop-color="#0029ff"/><stop offset="0.506" stop-color="#9600ff"/><stop offset="0.686" stop-color="#f0f"/><stop offset="0.752" stop-color="#f0d"/><stop offset="0.823" stop-color="#ff00c0"/><stop offset="0.905" stop-color="#ff00a6"/><stop offset="1" stop-color="#ff008f"/></linearGradient><linearGradient id="c64" gradientUnits="userSpaceOnUse" x1="1339" x2="1756"><stop offset="0" stop-color="#04f"/><stop offset="0.225" stop-color="#0027ff"/><stop offset="0.499" stop-color="#8e00ff"/><stop offset="0.7" stop-color="#f0f"/><stop offset="0.765" stop-color="#ff00de"/><stop offset="0.832" stop-color="#ff00c3"/><stop offset="1" stop-color="#ff0094"/></linearGradient><linearGradient id="c65" gradientUnits="userSpaceOnUse" x1="1342" x2="1752"><stop offset="0" stop-color="#0041ff"/><stop offset="0.222" stop-color="#0025ff"/><stop offset="0.49" stop-color="#8500ff"/><stop offset="0.715" stop-color="#f0f"/><stop offset="0.776" stop-color="#ff00e1"/><stop offset="0.841" stop-color="#ff00c7"/><stop offset="1" stop-color="#ff009a"/></linearGradient><linearGradient id="c66" gradientUnits="userSpaceOnUse" x1="1344" x2="1749"><stop offset="0" stop-color="#003eff"/><stop offset="0.222" stop-color="#0023ff"/><stop offset="0.481" stop-color="#7d00ff"/><stop offset="0.728" stop-color="#f0f"/><stop offset="0.852" stop-color="#ff00c9"/><stop offset="1" stop-color="#ff009f"/></linearGradient><linearGradient id="c67" gradientUnits="userSpaceOnUse" x1="1346" x2="1745"><stop offset="0" stop-color="#003bff"/><stop offset="0.223" stop-color="#0120ff"/><stop offset="0.474" stop-color="#7500ff"/><stop offset="0.744" stop-color="#fe00ff"/><stop offset="0.862" stop-color="#f0c"/><stop offset="1" stop-color="#ff00a4"/></linearGradient><linearGradient id="c68" gradientUnits="userSpaceOnUse" x1="1349" x2="1741"><stop offset="0" stop-color="#0038ff"/><stop offset="0.219" stop-color="#001fff"/><stop offset="0.464" stop-color="#6e00ff"/><stop offset="0.76" stop-color="#fe00ff"/><stop offset="0.872" stop-color="#ff00d0"/><stop offset="1" stop-color="#f0a"/></linearGradient><linearGradient id="c69" gradientUnits="userSpaceOnUse" x1="1351" x2="1737"><stop offset="0" stop-color="#0036ff"/><stop offset="0.22" stop-color="#001dff"/><stop offset="0.456" stop-color="#6700ff"/><stop offset="0.777" stop-color="#fe00ff"/><stop offset="0.881" stop-color="#ff00d4"/><stop offset="1" stop-color="#ff00b0"/></linearGradient><linearGradient id="c70" gradientUnits="userSpaceOnUse" x1="1353" x2="1733"><stop offset="0" stop-color="#03f"/><stop offset="0.221" stop-color="#011bff"/><stop offset="0.447" stop-color="#6000ff"/><stop offset="0.795" stop-color="#fe00ff"/><stop offset="0.892" stop-color="#ff00d7"/><stop offset="1" stop-color="#ff00b7"/></linearGradient><linearGradient id="c71" gradientUnits="userSpaceOnUse" x1="1356" x2="1729"><stop offset="0" stop-color="#0030ff"/><stop offset="0.217" stop-color="#0019ff"/><stop offset="0.44" stop-color="#5a00ff"/><stop offset="0.812" stop-color="#fe00ff"/><stop offset="0.903" stop-color="#ff00db"/><stop offset="1" stop-color="#ff00bd"/></linearGradient><linearGradient id="c72" gradientUnits="userSpaceOnUse" x1="1358" x2="1725"><stop offset="0" stop-color="#002eff"/><stop offset="0.218" stop-color="#0017ff"/><stop offset="0.431" stop-color="#5400ff"/><stop offset="0.831" stop-color="#fe00ff"/><stop offset="0.916" stop-color="#ff00de"/><stop offset="1" stop-color="#ff00c4"/></linearGradient><linearGradient id="c73" gradientUnits="userSpaceOnUse" x1="1361" x2="1721"><stop offset="0" stop-color="#002bff"/><stop offset="0.217" stop-color="#0115ff"/><stop offset="0.419" stop-color="#4d00ff"/><stop offset="0.85" stop-color="#fe00ff"/><stop offset="1" stop-color="#ff00cb"/></linearGradient><linearGradient id="c74" gradientUnits="userSpaceOnUse" x1="1363" x2="1717"><stop offset="0" stop-color="#0029ff"/><stop offset="0.215" stop-color="#0014ff"/><stop offset="0.41" stop-color="#4700ff"/><stop offset="0.87" stop-color="#fe00ff"/><stop offset="1" stop-color="#ff00d2"/></linearGradient><linearGradient id="c75" gradientUnits="userSpaceOnUse" x1="1366" x2="1714"><stop offset="0" stop-color="#0027ff"/><stop offset="0.213" stop-color="#0012ff"/><stop offset="0.397" stop-color="#4100ff"/><stop offset="0.888" stop-color="#fe00ff"/><stop offset="1" stop-color="#ff00d8"/></linearGradient><linearGradient id="c76" gradientUnits="userSpaceOnUse" x1="1368" x2="1710"><stop offset="0" stop-color="#0024ff"/><stop offset="0.213" stop-color="#0111ff"/><stop offset="0.386" stop-color="#3c00ff"/><stop offset="0.652" stop-color="#9b00ff"/><stop offset="0.909" stop-color="#fe00ff"/><stop offset="1" stop-color="#ff00e0"/></linearGradient><linearGradient id="c77" gradientUnits="userSpaceOnUse" x1="1371" x2="1706"><stop offset="0" stop-color="#02f"/><stop offset="0.209" stop-color="#000fff"/><stop offset="0.373" stop-color="#3600ff"/><stop offset="0.657" stop-color="#90f"/><stop offset="0.931" stop-color="#fe00ff"/><stop offset="1" stop-color="#ff00e8"/></linearGradient><linearGradient id="c78" gradientUnits="userSpaceOnUse" x1="1373" x2="1702"><stop offset="0" stop-color="#0020ff"/><stop offset="0.21" stop-color="#000eff"/><stop offset="0.362" stop-color="#3100ff"/><stop offset="0.663" stop-color="#9600ff"/><stop offset="0.954" stop-color="#fe00ff"/><stop offset="1" stop-color="#ff00f0"/></linearGradient><linearGradient id="c79" gradientUnits="userSpaceOnUse" x1="1376" x2="1698"><stop offset="0" stop-color="#001eff"/><stop offset="0.208" stop-color="#010cff"/><stop offset="0.348" stop-color="#2c00ff"/><stop offset="0.668" stop-color="#9300ff"/><stop offset="0.978" stop-color="#fe00ff"/><stop offset="1" stop-color="#ff00f8"/></linearGradient><linearGradient id="c80" gradientUnits="userSpaceOnUse" x1="1379" x2="1694"><stop offset="0" stop-color="#001cff"/><stop offset="0.203" stop-color="#000bff"/><stop offset="0.333" stop-color="#2700ff"/><stop offset="0.673" stop-color="#9000ff"/><stop offset="1" stop-color="#fd00ff"/></linearGradient><linearGradient id="c81" gradientUnits="userSpaceOnUse" x1="1381" x2="1690"><stop offset="0" stop-color="#001aff"/><stop offset="0.204" stop-color="#000aff"/><stop offset="0.324" stop-color="#2300ff"/><stop offset="0.667" stop-color="#8900ff"/><stop offset="1" stop-color="#f400ff"/></linearGradient><linearGradient id="c82" gradientUnits="userSpaceOnUse" x1="1384" x2="1686"><stop offset="0" stop-color="#0018ff"/><stop offset="0.202" stop-color="#0108ff"/><stop offset="0.308" stop-color="#1e00ff"/><stop offset="0.659" stop-color="#8300ff"/><stop offset="1" stop-color="#ec00ff"/></linearGradient><linearGradient id="c83" gradientUnits="userSpaceOnUse" x1="1387" x2="1682"><stop offset="0" stop-color="#0016ff"/><stop offset="0.197" stop-color="#0007ff"/><stop offset="0.292" stop-color="#1900ff"/><stop offset="0.651" stop-color="#7d00ff"/><stop offset="1" stop-color="#e400ff"/></linearGradient><linearGradient id="c84" gradientUnits="userSpaceOnUse" x1="1389" x2="1678"><stop offset="0" stop-color="#0014ff"/><stop offset="0.197" stop-color="#0006ff"/><stop offset="0.277" stop-color="#1500ff"/><stop offset="0.644" stop-color="#70f"/><stop offset="1" stop-color="#dc00ff"/></linearGradient><linearGradient id="c85" gradientUnits="userSpaceOnUse" x1="1392" x2="1675"><stop offset="0" stop-color="#0012ff"/><stop offset="0.194" stop-color="#0104ff"/><stop offset="0.258" stop-color="#1000ff"/><stop offset="0.636" stop-color="#7200ff"/><stop offset="1" stop-color="#d500ff"/></linearGradient><linearGradient id="c86" gradientUnits="userSpaceOnUse" x1="1395" x2="1671"><stop offset="0" stop-color="#0010ff"/><stop offset="0.188" stop-color="#0003ff"/><stop offset="0.601" stop-color="#6500ff"/><stop offset="1" stop-color="#ce00ff"/></linearGradient><linearGradient id="c87" gradientUnits="userSpaceOnUse" x1="1398" x2="1667"><stop offset="0" stop-color="#000eff"/><stop offset="0.186" stop-color="#0002ff"/><stop offset="0.599" stop-color="#6200ff"/><stop offset="1" stop-color="#c700ff"/></linearGradient><linearGradient id="c88" gradientUnits="userSpaceOnUse" x1="1401" x2="1663"><stop offset="0" stop-color="#000cff"/><stop offset="0.183" stop-color="#0101ff"/><stop offset="0.599" stop-color="#5f00ff"/><stop offset="1" stop-color="#c000ff"/></linearGradient><linearGradient id="c89" gradientUnits="userSpaceOnUse" x1="1404" x2="1659"><stop offset="0" stop-color="#000bff"/><stop offset="0.176" stop-color="#00f"/><stop offset="1" stop-color="#b900ff"/></linearGradient><linearGradient id="c90" gradientUnits="userSpaceOnUse" x1="1407" x2="1655"><stop offset="0" stop-color="#0009ff"/><stop offset="0.173" stop-color="#00f"/><stop offset="1" stop-color="#b200ff"/></linearGradient><linearGradient id="c91" gradientUnits="userSpaceOnUse" x1="1410" x2="1651"><stop offset="0" stop-color="#0007ff"/><stop offset="0.17" stop-color="#0100ff"/><stop offset="1" stop-color="#ac00ff"/></linearGradient><linearGradient id="c92" gradientUnits="userSpaceOnUse" x1="1413" x2="1647"><stop offset="0" stop-color="#0005ff"/><stop offset="0.162" stop-color="#00f"/><stop offset="1" stop-color="#a600ff"/></linearGradient><linearGradient id="c93" gradientUnits="userSpaceOnUse" x1="1416" x2="1643"><stop offset="0" stop-color="#0004ff"/><stop offset="0.159" stop-color="#00f"/><stop offset="1" stop-color="#a000ff"/></linearGradient><linearGradient id="c94" gradientUnits="userSpaceOnUse" x1="1419" x2="1639"><stop offset="0" stop-color="#0002ff"/><stop offset="0.15" stop-color="#00f"/><stop offset="1" stop-color="#9a00ff"/></linearGradient><linearGradient id="c95" gradientUnits="userSpaceOnUse" x1="1422" x2="1636"><stop offset="0" stop-color="#0001ff"/><stop offset="0.145" stop-color="#00f"/><stop offset="1" stop-color="#9500ff"/></linearGradient><linearGradient id="c96" gradientUnits="userSpaceOnUse" x1="1426" x2="1632"><stop offset="0" stop-color="#00f"/><stop offset="0.136" stop-color="#00f"/><stop offset="1" stop-color="#8f00ff"/></linearGradient><linearGradient id="c97" gradientUnits="userSpaceOnUse" x1="1429" x2="1628"><stop offset="0" stop-color="#00f"/><stop offset="0.126" stop-color="#00f"/><stop offset="1" stop-color="#8a00ff"/></linearGradient><linearGradient id="c98" gradientUnits="userSpaceOnUse" x1="1432" x2="1624"><stop offset="0" stop-color="#00f"/><stop offset="0.12" stop-color="#00f"/><stop offset="1" stop-color="#8400ff"/></linearGradient><linearGradient id="c99" gradientUnits="userSpaceOnUse" x1="1436" x2="1620"><stop offset="0" stop-color="#00f"/><stop offset="0.109" stop-color="#0100ff"/><stop offset="1" stop-color="#7f00ff"/></linearGradient><linearGradient id="c100" gradientUnits="userSpaceOnUse" x1="1439" x2="1616"><stop offset="0" stop-color="#00f"/><stop offset="0.096" stop-color="#00f"/><stop offset="1" stop-color="#7a00ff"/></linearGradient><linearGradient id="c101" gradientUnits="userSpaceOnUse" x1="1443" x2="1612"><stop offset="0" stop-color="#00f"/><stop offset="0.083" stop-color="#00f"/><stop offset="1" stop-color="#7500ff"/></linearGradient><linearGradient id="c102" gradientUnits="userSpaceOnUse" x1="1447" x2="1608"><stop offset="0" stop-color="#00f"/><stop offset="0.068" stop-color="#0100ff"/><stop offset="1" stop-color="#7000ff"/></linearGradient><linearGradient id="c103" gradientUnits="userSpaceOnUse" x1="1451" x2="1604"><stop offset="0" stop-color="#00f"/><stop offset="0.046" stop-color="#00f"/><stop offset="1" stop-color="#6b00ff"/></linearGradient><linearGradient id="c104" gradientUnits="userSpaceOnUse" x1="1455" x2="1600"><stop offset="0" stop-color="#00f"/><stop offset="1" stop-color="#6700ff"/></linearGradient><linearGradient id="c105" gradientUnits="userSpaceOnUse" x1="1459" x2="1597"><stop offset="0" stop-color="#00f"/><stop offset="1" stop-color="#6300ff"/></linearGradient><linearGradient id="c106" gradientUnits="userSpaceOnUse" x1="1463" x2="1593"><stop offset="0" stop-color="#0200ff"/><stop offset="1" stop-color="#5f00ff"/></linearGradient><linearGradient id="c107" gradientUnits="userSpaceOnUse" x1="1468" x2="1589"><stop offset="0" stop-color="#0500ff"/><stop offset="1" stop-color="#5a00ff"/></linearGradient><linearGradient id="c108" gradientUnits="userSpaceOnUse" x1="1472" x2="1585"><stop offset="0" stop-color="#0700ff"/><stop offset="1" stop-color="#5600ff"/></linearGradient><linearGradient id="c109" gradientUnits="userSpaceOnUse" x1="1477" x2="1581"><stop offset="0" stop-color="#0a00ff"/><stop offset="1" stop-color="#5200ff"/></linearGradient><linearGradient id="c110" gradientUnits="userSpaceOnUse" x1="1482" x2="1577"><stop offset="0" stop-color="#0d00ff"/><stop offset="1" stop-color="#4e00ff"/></linearGradient><linearGradient id="c111" gradientUnits="userSpaceOnUse" x1="1486" x2="1573"><stop offset="0" stop-color="#0f00ff"/><stop offset="1" stop-color="#4a00ff"/></linearGradient><linearGradient id="c112" gradientUnits="userSpaceOnUse" x1="1491" x2="1569"><stop offset="0" stop-color="#1200ff"/><stop offset="1" stop-color="#4600ff"/></linearGradient><linearGradient id="c113" gradientUnits="userSpaceOnUse" x1="1496" x2="1565"><stop offset="0" stop-color="#1400ff"/><stop offset="1" stop-color="#4200ff"/></linearGradient><linearGradient id="c114" gradientUnits="userSpaceOnUse" x1="1501" x2="1562"><stop offset="0" stop-color="#1700ff"/><stop offset="1" stop-color="#3f00ff"/></linearGradient><linearGradient id="c115" gradientUnits="userSpaceOnUse" x1="1506" x2="1558"><stop offset="0" stop-color="#1a00ff"/><stop offset="1" stop-color="#3c00ff"/></linearGradient><linearGradient id="c116" gradientUnits="userSpaceOnUse" x1="1511" x2="1554"><stop offset="0" stop-color="#1c00ff"/><stop offset="1" stop-color="#3800ff"/></linearGradient><linearGradient id="c117" gradientUnits="userSpaceOnUse" x1="1515" x2="1550"><stop offset="0" stop-color="#1e00ff"/><stop offset="1" stop-color="#3400ff"/></linearGradient><linearGradient id="c118" gradientUnits="userSpaceOnUse" x1="1520" x2="1546"><stop offset="0" stop-color="#2100ff"/><stop offset="1" stop-color="#3100ff"/></linearGradient><linearGradient id="c119" gradientUnits="userSpaceOnUse" x1="1525" x2="1542"><stop offset="0" stop-color="#2300ff"/><stop offset="1" stop-color="#2e00ff"/></linearGradient>
<g id="cf" filter="url(#vb)"><rect x="1275" y="227" width="121" height="5" fill="url(#c0)"/><rect x="1269" y="231" width="165" height="5" fill="url(#c1)"/><rect x="1266" y="235" width="203" height="5" fill="url(#c2)"/><rect x="1263" y="239" width="241" height="5" fill="url(#c3)"/><rect x="1261" y="243" width="278" height="5" fill="url(#c4)"/><rect x="1260" y="247" width="314" height="5" fill="url(#c5)"/><rect x="1259" y="251" width="350" height="5" fill="url(#c6)"/><rect x="1259" y="255" width="385" height="5" fill="url(#c7)"/><rect x="1259" y="259" width="420" height="5" fill="url(#c8)"/><rect x="1259" y="263" width="455" height="5" fill="url(#c9)"/><rect x="1259" y="267" width="490" height="5" fill="url(#c10)"/><rect x="1259" y="271" width="524" height="5" fill="url(#c11)"/><rect x="1259" y="275" width="559" height="5" fill="url(#c12)"/><rect x="1259" y="279" width="594" height="5" fill="url(#c13)"/><rect x="1259" y="283" width="629" height="5" fill="url(#c14)"/><rect x="1260" y="287" width="663" height="5" fill="url(#c15)"/><rect x="1260" y="291" width="674" height="5" fill="url(#c16)"/><rect x="1261" y="295" width="673" height="5" fill="url(#c17)"/><rect x="1262" y="299" width="672" height="5" fill="url(#c18)"/><rect x="1263" y="303" width="669" height="5" fill="url(#c19)"/><rect x="1263" y="307" width="665" height="5" fill="url(#c20)"/><rect x="1264" y="311" width="660" height="5" fill="url(#c21)"/><rect x="1265" y="315" width="655" height="5" fill="url(#c22)"/><rect x="1267" y="319" width="649" height="5" fill="url(#c23)"/><rect x="1268" y="323" width="644" height="5" fill="url(#c24)"/><rect x="1269" y="327" width="639" height="5" fill="url(#c25)"/><rect x="1270" y="331" width="635" height="5" fill="url(#c26)"/><rect x="1271" y="335" width="630" height="5" fill="url(#c27)"/><rect x="1273" y="339" width="624" height="5" fill="url(#c28)"/><rect x="1274" y="343" width="619" height="5" fill="url(#c29)"/><rect x="1275" y="347" width="614" height="5" fill="url(#c30)"/><rect x="1277" y="351" width="608" height="5" fill="url(#c31)"/><rect x="1278" y="355" width="603" height="5" fill="url(#c32)"/><rect x="1280" y="359" width="597" height="5" fill="url(#c33)"/><rect x="1281" y="363" width="592" height="5" fill="url(#c34)"/><rect x="1283" y="367" width="586" height="5" fill="url(#c35)"/><rect x="1284" y="371" width="582" height="5" fill="url(#c36)"/><rect x="1286" y="375" width="576" height="5" fill="url(#c37)"/><rect x="1288" y="379" width="570" height="5" fill="url(#c38)"/><rect x="1289" y="383" width="565" height="5" fill="url(#c39)"/><rect x="1291" y="387" width="559" height="5" fill="url(#c40)"/><rect x="1293" y="391" width="553" height="5" fill="url(#c41)"/><rect x="1294" y="395" width="548" height="5" fill="url(#c42)"/><rect x="1296" y="399" width="542" height="5" fill="url(#c43)"/><rect x="1298" y="403" width="536" height="5" fill="url(#c44)"/><rect x="1300" y="407" width="530" height="5" fill="url(#c45)"/><rect x="1301" y="411" width="526" height="5" fill="url(#c46)"/><rect x="1303" y="415" width="520" height="5" fill="url(#c47)"/><rect x="1305" y="419" width="514" height="5" fill="url(#c48)"/><rect x="1307" y="423" width="508" height="5" fill="url(#c49)"/><rect x="1309" y="427" width="502" height="5" fill="url(#c50)"/><rect x="1311" y="431" width="496" height="5" fill="url(#c51)"/><rect x="1313" y="435" width="490" height="5" fill="url(#c52)"/><rect x="1315" y="439" width="484" height="5" fill="url(#c53)"/><rect x="1317" y="443" width="478" height="5" fill="url(#c54)"/><rect x="1319" y="447" width="472" height="5" fill="url(#c55)"/><rect x="1321" y="451" width="467" height="5" fill="url(#c56)"/><rect x="1323" y="455" width="461" height="5" fill="url(#c57)"/><rect x="1326" y="459" width="454" height="5" fill="url(#c58)"/><rect x="1328" y="463" width="448" height="5" fill="url(#c59)"/><rect x="1330" y="467" width="442" height="5" fill="url(#c60)"/><rect x="1332" y="471" width="436" height="5" fill="url(#c61)"/><rect x="1335" y="475" width="429" height="5" fill="url(#c62)"/><rect x="1337" y="479" width="423" height="5" fill="url(#c63)"/><rect x="1339" y="483" width="417" height="5" fill="url(#c64)"/><rect x="1342" y="487" width="410" height="5" fill="url(#c65)"/><rect x="1344" y="491" width="405" height="5" fill="url(#c66)"/><rect x="1346" y="495" width="399" height="5" fill="url(#c67)"/><rect x="1349" y="499" width="392" height="5" fill="url(#c68)"/><rect x="1351" y="503" width="386" height="5" fill="url(#c69)"/><rect x="1353" y="507" width="380" height="5" fill="url(#c70)"/><rect x="1356" y="511" width="373" height="5" fill="url(#c71)"/><rect x="1358" y="515" width="367" height="5" fill="url(#c72)"/><rect x="1361" y="519" width="360" height="5" fill="url(#c73)"/><rect x="1363" y="523" width="354" height="5" fill="url(#c74)"/><rect x="1366" y="527" width="348" height="5" fill="url(#c75)"/><rect x="1368" y="531" width="342" height="5" fill="url(#c76)"/><rect x="1371" y="535" width="335" height="5" fill="url(#c77)"/><rect x="1373" y="539" width="329" height="5" fill="url(#c78)"/><rect x="1376" y="543" width="322" height="5" fill="url(#c79)"/><rect x="1379" y="547" width="315" height="5" fill="url(#c80)"/><rect x="1381" y="551" width="309" height="5" fill="url(#c81)"/><rect x="1384" y="555" width="302" height="5" fill="url(#c82)"/><rect x="1387" y="559" width="295" height="5" fill="url(#c83)"/><rect x="1389" y="563" width="289" height="5" fill="url(#c84)"/><rect x="1392" y="567" width="283" height="5" fill="url(#c85)"/><rect x="1395" y="571" width="276" height="5" fill="url(#c86)"/><rect x="1398" y="575" width="269" height="5" fill="url(#c87)"/><rect x="1401" y="579" width="262" height="5" fill="url(#c88)"/><rect x="1404" y="583" width="255" height="5" fill="url(#c89)"/><rect x="1407" y="587" width="248" height="5" fill="url(#c90)"/><rect x="1410" y="591" width="241" height="5" fill="url(#c91)"/><rect x="1413" y="595" width="234" height="5" fill="url(#c92)"/><rect x="1416" y="599" width="227" height="5" fill="url(#c93)"/><rect x="1419" y="603" width="220" height="5" fill="url(#c94)"/><rect x="1422" y="607" width="214" height="5" fill="url(#c95)"/><rect x="1426" y="611" width="206" height="5" fill="url(#c96)"/><rect x="1429" y="615" width="199" height="5" fill="url(#c97)"/><rect x="1432" y="619" width="192" height="5" fill="url(#c98)"/><rect x="1436" y="623" width="184" height="5" fill="url(#c99)"/><rect x="1439" y="627" width="177" height="5" fill="url(#c100)"/><rect x="1443" y="631" width="169" height="5" fill="url(#c101)"/><rect x="1447" y="635" width="161" height="5" fill="url(#c102)"/><rect x="1451" y="639" width="153" height="5" fill="url(#c103)"/><rect x="1455" y="643" width="145" height="5" fill="url(#c104)"/><rect x="1459" y="647" width="138" height="5" fill="url(#c105)"/><rect x="1463" y="651" width="130" height="5" fill="url(#c106)"/><rect x="1468" y="655" width="121" height="5" fill="url(#c107)"/><rect x="1472" y="659" width="113" height="5" fill="url(#c108)"/><rect x="1477" y="663" width="104" height="5" fill="url(#c109)"/><rect x="1482" y="667" width="95" height="5" fill="url(#c110)"/><rect x="1486" y="671" width="87" height="5" fill="url(#c111)"/><rect x="1491" y="675" width="78" height="5" fill="url(#c112)"/><rect x="1496" y="679" width="69" height="5" fill="url(#c113)"/><rect x="1501" y="683" width="61" height="5" fill="url(#c114)"/><rect x="1506" y="687" width="52" height="5" fill="url(#c115)"/><rect x="1511" y="691" width="43" height="5" fill="url(#c116)"/><rect x="1515" y="695" width="35" height="5" fill="url(#c117)"/><rect x="1520" y="699" width="26" height="5" fill="url(#c118)"/><rect x="1525" y="703" width="17" height="5" fill="url(#c119)"/></g>
<linearGradient id="ins" gradientUnits="userSpaceOnUse" x1="1669.5" y1="552.5" x2="1935.1" y2="730.7"><stop offset="0.000" stop-color="#89ff00"/><stop offset="0.131" stop-color="#aaff00"/><stop offset="0.469" stop-color="#ffff00"/><stop offset="0.875" stop-color="#ffb400"/><stop offset="1.000" stop-color="#ff9e00"/></linearGradient>
<clipPath id="insc"><rect x="1688" y="564" width="213.5" height="145"/></clipPath>
</defs>
<rect x="1259.0" y="218.0" width="649.5" height="499.5" fill="#232323"/>
<g clip-path="url(#loc)"><use href="#cf"/><rect x="1250" y="210" width="670" height="520" fill="#000" opacity=".385"/></g>
<g clip-path="url(#tric)"><use href="#cf"/></g>
<rect x="1259.0" y="218.0" width="649.5" height="499.5" fill="none" stroke="#a6a6a6" stroke-width="1.6"/>
<path d="M1259 717.5v6.5M1253 717.5h6M1313 717.5v6.5M1253 675.95h6M1367 717.5v6.5M1253 634.4h6M1421 717.5v6.5M1253 592.85h6M1475 717.5v6.5M1253 551.3h6M1529 717.5v6.5M1253 509.75h6M1583 717.5v6.5M1253 468.2h6M1637 717.5v6.5M1253 426.65h6M1691 717.5v6.5M1253 385.1h6M1745 717.5v6.5M1253 343.55h6M1799 717.5v6.5M1253 302h6M1853 717.5v6.5M1253 260.45h6" stroke="#c8c8c8" stroke-width="1.4" fill="none"/>
<g id="cielabels"><text x="1259" y="739.6" font-size="14" fill="#d4d4d4" text-anchor="middle" textLength="6.8" lengthAdjust="spacingAndGlyphs">0</text><text x="1252.3" y="723.5" font-size="14" fill="#d4d4d4" text-anchor="end" textLength="6.8" lengthAdjust="spacingAndGlyphs">0</text><text x="1313" y="739.6" font-size="14" fill="#d4d4d4" text-anchor="middle" textLength="28.4" lengthAdjust="spacingAndGlyphs">0,05</text><text x="1252.3" y="681.95" font-size="14" fill="#d4d4d4" text-anchor="end" textLength="28.4" lengthAdjust="spacingAndGlyphs">0,05</text><text x="1367" y="739.6" font-size="14" fill="#d4d4d4" text-anchor="middle" textLength="18.6" lengthAdjust="spacingAndGlyphs">0,1</text><text x="1252.3" y="640.4" font-size="14" fill="#d4d4d4" text-anchor="end" textLength="18.6" lengthAdjust="spacingAndGlyphs">0,1</text><text x="1421" y="739.6" font-size="14" fill="#d4d4d4" text-anchor="middle" textLength="28.4" lengthAdjust="spacingAndGlyphs">0,15</text><text x="1252.3" y="598.85" font-size="14" fill="#d4d4d4" text-anchor="end" textLength="28.4" lengthAdjust="spacingAndGlyphs">0,15</text><text x="1475" y="739.6" font-size="14" fill="#d4d4d4" text-anchor="middle" textLength="18.6" lengthAdjust="spacingAndGlyphs">0,2</text><text x="1252.3" y="557.3" font-size="14" fill="#d4d4d4" text-anchor="end" textLength="18.6" lengthAdjust="spacingAndGlyphs">0,2</text><text x="1529" y="739.6" font-size="14" fill="#d4d4d4" text-anchor="middle" textLength="28.4" lengthAdjust="spacingAndGlyphs">0,25</text><text x="1252.3" y="515.75" font-size="14" fill="#d4d4d4" text-anchor="end" textLength="28.4" lengthAdjust="spacingAndGlyphs">0,25</text><text x="1583" y="739.6" font-size="14" fill="#d4d4d4" text-anchor="middle" textLength="18.6" lengthAdjust="spacingAndGlyphs">0,3</text><text x="1252.3" y="474.2" font-size="14" fill="#d4d4d4" text-anchor="end" textLength="18.6" lengthAdjust="spacingAndGlyphs">0,3</text><text x="1637" y="739.6" font-size="14" fill="#d4d4d4" text-anchor="middle" textLength="28.4" lengthAdjust="spacingAndGlyphs">0,35</text><text x="1252.3" y="432.65" font-size="14" fill="#d4d4d4" text-anchor="end" textLength="28.4" lengthAdjust="spacingAndGlyphs">0,35</text><text x="1691" y="739.6" font-size="14" fill="#d4d4d4" text-anchor="middle" textLength="18.6" lengthAdjust="spacingAndGlyphs">0,4</text><text x="1252.3" y="391.1" font-size="14" fill="#d4d4d4" text-anchor="end" textLength="18.6" lengthAdjust="spacingAndGlyphs">0,4</text><text x="1745" y="739.6" font-size="14" fill="#d4d4d4" text-anchor="middle" textLength="28.4" lengthAdjust="spacingAndGlyphs">0,45</text><text x="1252.3" y="349.55" font-size="14" fill="#d4d4d4" text-anchor="end" textLength="28.4" lengthAdjust="spacingAndGlyphs">0,45</text><text x="1799" y="739.6" font-size="14" fill="#d4d4d4" text-anchor="middle" textLength="18.6" lengthAdjust="spacingAndGlyphs">0,5</text><text x="1252.3" y="308" font-size="14" fill="#d4d4d4" text-anchor="end" textLength="18.6" lengthAdjust="spacingAndGlyphs">0,5</text><text x="1853" y="739.6" font-size="14" fill="#d4d4d4" text-anchor="middle" textLength="28.4" lengthAdjust="spacingAndGlyphs">0,55</text><text x="1252.3" y="266.45" font-size="14" fill="#d4d4d4" text-anchor="end" textLength="28.4" lengthAdjust="spacingAndGlyphs">0,55</text></g>
<text x="1566.6" y="213" font-size="14.7" fill="#d2d2d2" text-anchor="middle" textLength="85.5" lengthAdjust="spacingAndGlyphs">CIE 1976 u'v'</text>
<g id="targets" fill="none" stroke="#fff" stroke-width="1.5"><rect x="1515.0" y="312.2" width="13" height="13"/><rect x="1569.5" y="302.5" width="13" height="13"/><rect x="1619.2" y="294.1" width="13" height="13"/><rect x="1675.7" y="285.8" width="13" height="13"/><rect x="1739.4" y="274.7" width="13" height="13"/><rect x="1444.9" y="298.3" width="13" height="13"/><rect x="1426.5" y="279.7" width="13" height="13"/><rect x="1411.6" y="265.3" width="13" height="13"/><rect x="1400.1" y="253.3" width="13" height="13"/><rect x="1386.7" y="241.8" width="13" height="13"/><rect x="1453.0" y="322.9" width="13" height="13"/><rect x="1439.9" y="324.5" width="13" height="13"/><rect x="1426.8" y="327.1" width="13" height="13"/><rect x="1414.5" y="328.7" width="13" height="13"/><rect x="1401.9" y="331.8" width="13" height="13"/><rect x="1462.7" y="350.7" width="13" height="13"/><rect x="1460.3" y="389.4" width="13" height="13"/><rect x="1455.9" y="433.7" width="13" height="13"/><rect x="1450.9" y="492.8" width="13" height="13"/><rect x="1441.9" y="578.4" width="13" height="13"/><rect x="1483.9" y="336.8" width="13" height="13"/><rect x="1503.2" y="356.2" width="13" height="13"/><rect x="1522.3" y="377.1" width="13" height="13"/><rect x="1549.8" y="403.3" width="13" height="13"/><rect x="1582.0" y="435.2" width="13" height="13"/><rect x="1467.8" y="302.7" width="13" height="13"/><rect x="1469.3" y="286.8" width="13" height="13"/><rect x="1470.6" y="273.3" width="13" height="13"/><rect x="1471.6" y="261.7" width="13" height="13"/><rect x="1472.7" y="249.9" width="13" height="13"/></g>
<rect x="1466.4" y="320.4" width="12.6" height="12.6" fill="#fff" fill-opacity=".25" stroke="#111" stroke-width="2"/>
<g id="measured" stroke="#141414" stroke-width="1.3"><circle cx="1519.2" cy="336.5" r="4.1" fill="#b89090"/><circle cx="1578.3" cy="322.9" r="4.1" fill="#b86969"/><circle cx="1632.3" cy="310.1" r="4.1" fill="#b84a4a"/><circle cx="1694.3" cy="294.9" r="4.1" fill="#b82828"/><circle cx="1755.0" cy="281.7" r="4.1" fill="#c60000"/><circle cx="1445.6" cy="321.0" r="4.1" fill="#90b690"/><circle cx="1428.1" cy="297.7" r="4.1" fill="#69b469"/><circle cx="1414.2" cy="279.9" r="4.1" fill="#4ab24a"/><circle cx="1401.9" cy="263.2" r="4.1" fill="#28b128"/><circle cx="1392.2" cy="250.6" r="4.1" fill="#00bc00"/><circle cx="1463.7" cy="389.1" r="4.1" fill="#9090b8"/><circle cx="1459.7" cy="434.4" r="4.1" fill="#6969b8"/><circle cx="1455.3" cy="484.7" r="4.1" fill="#4a4ab8"/><circle cx="1449.9" cy="539.3" r="4.1" fill="#2828b8"/><circle cx="1445.3" cy="604.6" r="4.1" fill="#0000c6"/><circle cx="1453.2" cy="351.7" r="4.1" fill="#90b8b8"/><circle cx="1441.7" cy="354.3" r="4.1" fill="#69b8b8"/><circle cx="1429.1" cy="358.7" r="4.1" fill="#4ab8b8"/><circle cx="1418.6" cy="360.3" r="4.1" fill="#28b8b8"/><circle cx="1408.7" cy="362.9" r="4.1" fill="#00c6c6"/><circle cx="1484.6" cy="371.0" r="4.1" fill="#b890b8"/><circle cx="1502.7" cy="396.2" r="4.1" fill="#b869b8"/><circle cx="1520.7" cy="417.9" r="4.1" fill="#b84ab8"/><circle cx="1542.5" cy="447.0" r="4.1" fill="#b828b8"/><circle cx="1566.3" cy="478.9" r="4.1" fill="#c600c6"/><circle cx="1469.3" cy="325.7" r="4.1" fill="#b4b9b6"/><circle cx="1471.2" cy="304.6" r="4.1" fill="#b4ba96"/><circle cx="1472.8" cy="286.5" r="4.1" fill="#b4ba76"/><circle cx="1474.0" cy="271.5" r="4.1" fill="#b4b855"/><circle cx="1475.4" cy="257.4" r="4.1" fill="#b8ba18"/><circle cx="1468.1" cy="345.9" r="4.1" fill="#fff"/><circle cx="1465" cy="372.1" r="4.3" fill="#000"/></g>
<rect x="1684.5" y="560.5" width="220" height="151" fill="#333"/>
<rect x="1687.5" y="563.5" width="214.5" height="146" fill="url(#ins)" stroke="#9a9a9a" stroke-width="1.2"/>
<polygon points="1688,564 1901.5,564 1901.5,693.2 1688,579" fill="#000" opacity=".385" clip-path="url(#insc)"/>
<rect x="1787.2" y="629.1" width="13.4" height="13.4" fill="none" stroke="#fff" stroke-width="1.5"/>
<circle cx="1763.8" cy="637.2" r="4.2" fill="#b8ba18" stroke="#141414" stroke-width="1.3"/>
</svg>
<!-- table -->
<div id="tbl"><div class="hd"></div>
<div class="r" style="top:27.9px;height:26.7px;background:#404040"></div>
<div class="r" style="top:54.4px;height:26.5px;background:#808080"></div>
<div class="r" style="top:80.7px;height:26.4px;background:#404040"></div>
<div class="r" style="top:106.9px;height:26.7px;background:#808080"></div>
<div class="r" style="top:133.4px;height:26.4px;background:#404040"></div>
<div class="r" style="top:159.6px;height:26.3px;background:#808080"></div>
<div class="r" style="top:185.7px;height:26.3px;background:#404040"></div>
<div class="r" style="top:211.8px;height:26.7px;background:#808080"></div>
<span class="t" style="left:231.7px;top:7.74px;font-size:14.6px;transform:scaleX(1.369);color:#f2f2f2;text-shadow:0 0 .7px #fff">20%</span>
<span class="t" style="left:339.8px;top:7.74px;font-size:14.6px;transform:scaleX(1.379);color:#f2f2f2;text-shadow:0 0 .7px #fff">40%</span>
<span class="t" style="left:447.4px;top:7.74px;font-size:14.6px;transform:scaleX(1.369);color:#f2f2f2;text-shadow:0 0 .7px #fff">60%</span>
<span class="t" style="left:555.4px;top:7.74px;font-size:14.6px;transform:scaleX(1.369);color:#f2f2f2;text-shadow:0 0 .7px #fff">80%</span>
<span class="t" style="left:657.7px;top:7.74px;font-size:14.6px;transform:scaleX(1.385);color:#f2f2f2;text-shadow:0 0 .7px #fff">100%</span>
<span class="t" style="left:18.4px;top:35.19px;font-size:15.6px;transform:scaleX(1.417);font-weight:700;color:#f4f4f4;">x: CIE31</span>
<span class="t" style="left:204.4px;top:35.19px;font-size:15.6px;transform:scaleX(1.442);color:#f0f0f0;">0,3099</span>
<span class="t" style="left:312.2px;top:35.19px;font-size:15.6px;transform:scaleX(1.442);color:#f0f0f0;">0,3362</span>
<span class="t" style="left:420.1px;top:35.19px;font-size:15.6px;transform:scaleX(1.442);color:#f0f0f0;">0,3621</span>
<span class="t" style="left:527.9px;top:35.19px;font-size:15.6px;transform:scaleX(1.442);color:#f0f0f0;">0,3863</span>
<span class="t" style="left:635.8px;top:35.19px;font-size:15.6px;transform:scaleX(1.442);color:#f0f0f0;">0,4123</span>
<span class="t" style="left:18.4px;top:61.69px;font-size:15.6px;transform:scaleX(1.417);font-weight:700;color:#f4f4f4;">y: CIE31</span>
<span class="t" style="left:204.4px;top:61.69px;font-size:15.6px;transform:scaleX(1.442);color:#f0f0f0;">0,3322</span>
<span class="t" style="left:312.2px;top:61.69px;font-size:15.6px;transform:scaleX(1.442);color:#f0f0f0;">0,3765</span>
<span class="t" style="left:420.1px;top:61.69px;font-size:15.6px;transform:scaleX(1.442);color:#f0f0f0;">0,4202</span>
<span class="t" style="left:527.9px;top:61.69px;font-size:15.6px;transform:scaleX(1.478);color:#f0f0f0;">0,4611</span>
<span class="t" style="left:635.8px;top:61.69px;font-size:15.6px;transform:scaleX(1.442);color:#f0f0f0;">0,5047</span>
<span class="t" style="left:18.4px;top:87.99px;font-size:15.6px;transform:scaleX(1.278);font-weight:700;color:#f4f4f4;">Y</span>
<span class="t" style="left:204.4px;top:87.99px;font-size:15.6px;transform:scaleX(1.442);color:#f0f0f0;">177,7647</span>
<span class="t" style="left:312.2px;top:87.99px;font-size:15.6px;transform:scaleX(1.442);color:#f0f0f0;">174,1649</span>
<span class="t" style="left:420.1px;top:87.99px;font-size:15.6px;transform:scaleX(1.442);color:#f0f0f0;">171,3981</span>
<span class="t" style="left:527.9px;top:87.99px;font-size:15.6px;transform:scaleX(1.442);color:#f0f0f0;">169,3571</span>
<span class="t" style="left:635.8px;top:87.99px;font-size:15.6px;transform:scaleX(1.442);color:#f0f0f0;">167,1635</span>
<span class="t" style="left:18.4px;top:114.19px;font-size:15.6px;transform:scaleX(1.471);font-weight:700;color:#f4f4f4;">Target x:CIE31</span>
<span class="t" style="left:204.4px;top:114.19px;font-size:15.6px;transform:scaleX(1.442);color:#f0f0f0;">0,3344</span>
<span class="t" style="left:312.2px;top:114.19px;font-size:15.6px;transform:scaleX(1.442);color:#f0f0f0;">0,3565</span>
<span class="t" style="left:420.1px;top:114.19px;font-size:15.6px;transform:scaleX(1.442);color:#f0f0f0;">0,3775</span>
<span class="t" style="left:527.9px;top:114.19px;font-size:15.6px;transform:scaleX(1.442);color:#f0f0f0;">0,3971</span>
<span class="t" style="left:635.8px;top:114.19px;font-size:15.6px;transform:scaleX(1.442);color:#f0f0f0;">0,4193</span>
<span class="t" style="left:18.4px;top:140.69px;font-size:15.6px;transform:scaleX(1.471);font-weight:700;color:#f4f4f4;">Target y:CIE31</span>
<span class="t" style="left:204.4px;top:140.69px;font-size:15.6px;transform:scaleX(1.442);color:#f0f0f0;">0,3649</span>
<span class="t" style="left:312.2px;top:140.69px;font-size:15.6px;transform:scaleX(1.442);color:#f0f0f0;">0,4015</span>
<span class="t" style="left:420.1px;top:140.69px;font-size:15.6px;transform:scaleX(1.442);color:#f0f0f0;">0,4361</span>
<span class="t" style="left:527.9px;top:140.69px;font-size:15.6px;transform:scaleX(1.442);color:#f0f0f0;">0,4686</span>
<span class="t" style="left:635.8px;top:140.69px;font-size:15.6px;transform:scaleX(1.442);color:#f0f0f0;">0,5053</span>
<span class="t" style="left:18.4px;top:166.89px;font-size:15.6px;transform:scaleX(1.509);font-weight:700;color:#f4f4f4;">Target Y</span>
<span class="t" style="left:204.4px;top:166.89px;font-size:15.6px;transform:scaleX(1.442);color:#f0f0f0;">190,9220</span>
<span class="t" style="left:312.2px;top:166.89px;font-size:15.6px;transform:scaleX(1.442);color:#f0f0f0;">187,5689</span>
<span class="t" style="left:420.1px;top:166.89px;font-size:15.6px;transform:scaleX(1.442);color:#f0f0f0;">184,9933</span>
<span class="t" style="left:527.9px;top:166.89px;font-size:15.6px;transform:scaleX(1.442);color:#f0f0f0;">182,9730</span>
<span class="t" style="left:635.8px;top:166.89px;font-size:15.6px;transform:scaleX(1.442);color:#f0f0f0;">181,0462</span>
<span class="t" style="left:18.4px;top:192.99px;font-size:15.6px;transform:scaleX(1.500);font-weight:700;color:#f4f4f4;">ΔE 2000</span>
<span class="t" style="left:204.4px;top:192.99px;font-size:15.6px;transform:scaleX(1.428);color:#f0f0f0;">10,4021</span>
<span class="t" style="left:312.2px;top:192.99px;font-size:15.6px;transform:scaleX(1.442);color:#f0f0f0;">5,8431</span>
<span class="t" style="left:420.1px;top:192.99px;font-size:15.6px;transform:scaleX(1.442);color:#f0f0f0;">3,8397</span>
<span class="t" style="left:527.9px;top:192.99px;font-size:15.6px;transform:scaleX(1.442);color:#f0f0f0;">2,8781</span>
<span class="t" style="left:635.8px;top:192.99px;font-size:15.6px;transform:scaleX(1.442);color:#f0f0f0;">2,4026</span>
<span class="t" style="left:18.4px;top:219.09px;font-size:15.6px;transform:scaleX(1.444);font-weight:700;color:#f4f4f4;">ΔE ITP</span>
<span class="t" style="left:204.4px;top:219.09px;font-size:15.6px;transform:scaleX(1.428);color:#f0f0f0;">16,5516</span>
<span class="t" style="left:312.2px;top:219.09px;font-size:15.6px;transform:scaleX(1.428);color:#f0f0f0;">14,3212</span>
<span class="t" style="left:420.1px;top:219.09px;font-size:15.6px;transform:scaleX(1.458);color:#f0f0f0;">11,7490</span>
<span class="t" style="left:527.9px;top:219.09px;font-size:15.6px;transform:scaleX(1.442);color:#f0f0f0;">9,3686</span>
<span class="t" style="left:635.8px;top:219.09px;font-size:15.6px;transform:scaleX(1.442);color:#f0f0f0;">7,6687</span>
</div>
<!-- bottom -->
<div class="bb" style="left:226.3px;width:50.4px"><div class="ic" style="left:16.8px;top:2.4px;width:17px;height:17px"></div><svg width="10" height="6" viewBox="0 0 10 6" style="left:20.3px;top:7.6px"><path d="M5 .3L9.7 5.7H.3z" fill="#222"/></svg><div style="left:5.9px;top:29.7px;width:39.2px;height:33.5px;border-radius:4.5px;background:#ff0;box-shadow:inset 1px 1px 2px rgba(120,120,0,.6),0 0 0 1px rgba(110,110,90,.5)"></div></div>
<div class="bb" style="left:283.7px;width:168.3px"><u style="background:#c0c0a5"></u>
<span class="t" style="left:73.1px;top:53.95px;font-size:11.4px;transform:scaleX(0.991);font-weight:700;color:#2c2c2c;">20%</span>
</div>
<div class="bb" style="left:454.8px;width:168.3px"><u style="background:#c0c086"></u>
<span class="t" style="left:73.1px;top:53.95px;font-size:11.4px;transform:scaleX(0.991);font-weight:700;color:#2c2c2c;">40%</span>
</div>
<div class="bb" style="left:625.7px;width:168.3px"><u style="background:#c0c06a"></u>
<span class="t" style="left:73.1px;top:53.95px;font-size:11.4px;transform:scaleX(0.991);font-weight:700;color:#2c2c2c;">60%</span>
</div>
<div class="bb" style="left:796.7px;width:168.3px"><u style="background:#c0c04a"></u>
<span class="t" style="left:73.1px;top:53.95px;font-size:11.4px;transform:scaleX(0.991);font-weight:700;color:#2c2c2c;">80%</span>
</div>
<div class="bb bsel" style="left:967.7px;width:168.3px"><u style="background:#c4c400"></u>
<span class="t" style="left:69.65px;top:53.95px;font-size:11.4px;transform:scaleX(1.012);font-weight:700;color:#fff;">100%</span>
</div>
<div class="cb" style="left:1556.8px;top:1076.8px;width:53.6px;height:70px;border-radius:6px 6px 0 0">
<div style="left:0;top:19px;width:100%;height:1px;background:#5a5a5a;border-bottom:1px solid #a0a0a0;height:2px"></div>
<div class="ic" style="left:17.5px;top:1.5px;width:17px;height:17px"></div><svg width="10" height="6" viewBox="0 0 10 6" style="left:21px;top:6.7px"><path d="M5 .3L9.7 5.7H.3z" fill="#222"/></svg>
<div style="left:8px;top:26.4px;width:36px;height:35.4px;border-radius:5px;background:linear-gradient(#d8d8d8,#b8b8b8 50%,#8c8c8c 52%,#a8a8a8);border:2px solid #3a3a3a;box-shadow:inset 0 0 0 1.5px #eee"><div style="left:8.5px;top:7.7px;width:16px;height:16px;background:linear-gradient(#222,#000 50%)"></div></div>
</div>
<div class="cb" style="left:1611.6px;top:1076.8px;width:51.5px;height:33px;border-radius:6px 0 0 0"><div class="ic" style="left:13.25px;top:4.4px"></div><svg width="23" height="23" viewBox="-11.500 -11.500 23 23" style="left:13.25px;top:4.4px"><rect x="-4.5" y="-4.5" width="9" height="9" fill="#3a3a3a"/></svg></div>
<div class="cb" style="left:1663.1px;top:1076.8px;width:51.1px;height:33px;border-radius:0"><div class="ic" style="left:13.05px;top:4.4px"></div><svg width="23" height="23" viewBox="-11.500 -11.500 23 23" style="left:13.05px;top:4.4px"><path d="M-4-5.5v11L5.5 0z" fill="#333"/></svg></div>
<div class="cb" style="left:1714.2px;top:1076.8px;width:50.4px;height:33px;border-radius:0"><div class="ic" style="left:12.7px;top:4.4px"></div><svg width="23" height="23" viewBox="-11.500 -11.500 23 23" style="left:12.7px;top:4.4px"><path d="M-3.5-5.5h-2.4v11h2.4M3.5-5.5h2.4v11h-2.4" fill="none" stroke="#333" stroke-width="1.6"/><path d="M-2.6 0h1.2M-.6 0h1.2M1.4 0h1.2" stroke="#333" stroke-width="1.4"/></svg></div>
<div class="cb" style="left:1764.6px;top:1076.8px;width:50.9px;height:33px;border-radius:0"><div class="ic" style="left:12.95px;top:4.4px"></div><svg width="23" height="23" viewBox="-11.500 -11.500 23 23" style="left:12.95px;top:4.4px"><path d="M0 0c-1.6-2.6-3.2-3.6-4.6-3.6a3.4 3.4 0 0 0 0 7.2c1.4 0 3-1 4.6-3.6c1.600 2.6 3.2 3.600 4.600 3.600a3.400 3.400 0 0 0 0-7.200c-1.400 0-3 1-4.600 3.600z" fill="none" stroke="#333" stroke-width="1.7"/></svg></div>
<div class="cb" style="left:1815.5px;top:1076.8px;width:50.7px;height:33px;border-radius:0"><div class="ic" style="left:12.85px;top:4.4px"></div><svg width="23" height="23" viewBox="-11.500 -11.500 23 23" style="left:12.85px;top:4.4px"><path d="M-5.2-1a5.4 5.4 0 0 1 9.400-2.400M5.200 1a5.400 5.400 0 0 1-9.400 2.400" fill="none" stroke="#333" stroke-width="2"/><path d="M5.800-6.200v4.600h-4.600zM-5.800 6.200v-4.600h4.600z" fill="#333"/></svg></div>
<div class="cb" style="left:1866.2px;top:1076.8px;width:54.8px;height:33px;border-radius:0"><div class="ic" style="left:14.8px;top:4.4px"></div><svg width="23" height="23" viewBox="-11.500 -11.500 23 23" style="left:14.8px;top:4.4px"></svg></div>
<div class="cb" style="left:1611.6px;top:1110.5px;width:153px;height:36px"><div class="ic" style="left:23.3px;top:6.3px"></div>
<span class="t" style="left:29.62px;top:7.52px;font-size:19px;color:#333;">«</span>
<span class="t" style="left:65px;top:4.88px;font-size:25.3px;color:#333;-webkit-text-stroke:.55px #333;text-shadow:0 1px 0 rgba(255,255,255,.22)">Back</span>
</div>
<div class="cb" style="left:1764.6px;top:1110.5px;width:158px;height:36px"><div class="ic" style="left:110px;top:6.3px"></div>
<span class="t" style="left:116.52px;top:7.52px;font-size:19px;color:#333;">»</span>
<span class="t" style="left:32.2px;top:4.88px;font-size:25.3px;transform:scaleX(1.115);color:#333;-webkit-text-stroke:.55px #333;text-shadow:0 1px 0 rgba(255,255,255,.22)">Next</span>
</div>
</body></html>
